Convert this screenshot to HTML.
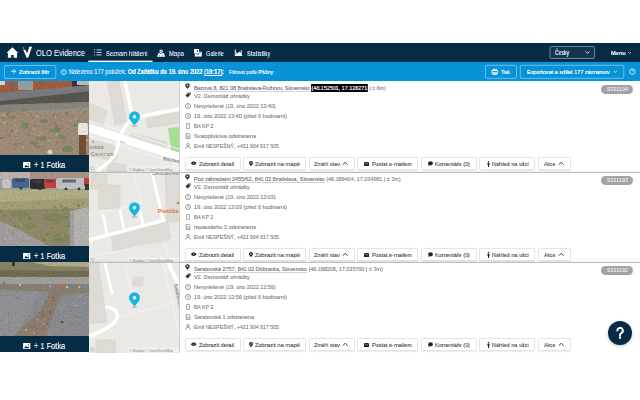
<!DOCTYPE html>
<html><head><meta charset="utf-8"><style>
*{margin:0;padding:0;box-sizing:border-box}
html,body{width:640px;height:400px;overflow:hidden;background:#fff;font-family:"Liberation Sans",sans-serif}
.abs{position:absolute}
#nav{position:absolute;left:0;top:43px;width:640px;height:19px;background:#062b45}
#bar{position:absolute;left:0;top:62px;width:640px;height:19px;background:#0893d8}
.t{position:absolute;white-space:nowrap;transform-origin:0 0;will-change:transform;z-index:5}
.wt{color:#fff;-webkit-text-stroke:0.08px #fff}
.ln{color:#707070;-webkit-text-stroke:0.1px #888}
.ln u{color:#555;text-decoration:none;background:linear-gradient(#b4b4b4,#b4b4b4) 0 100%/100% 0.6px no-repeat;padding-bottom:0.9px}
.sel{background:#000;color:#fff;-webkit-text-stroke:0.15px #fff;padding:0.9px 0.4px 0.7px 0.3px}
.bt{color:#fff}
.bx{color:#3c3c3c;-webkit-text-stroke:0.1px #555}
.ct{color:#fff;-webkit-text-stroke:0.2px #fff}
.photo{position:absolute;left:0;width:89px;height:90px;overflow:hidden}
.map{position:absolute;left:89px;width:91px;height:91px;overflow:hidden;border-right:1px solid #cfcfcf}
.cap{position:absolute;left:0;width:89px;background:#062b45}
.badge{position:absolute;left:601px;width:32.4px;height:9.4px;border-radius:4.7px;background:#a3a3a3}
.btn{position:absolute;height:12.2px;border:1px solid #e4e4e4;border-radius:1.5px;background:#fff;box-shadow:0 0.5px 1px rgba(0,0,0,0.08)}
.sep{position:absolute;z-index:2;left:89px;width:551px;height:1.2px;background:#bdbdbd;box-shadow:0 -1px 1.5px rgba(0,0,0,0.07)}
#help{position:absolute;left:608px;top:320.5px;width:24px;height:24px;border-radius:12px;background:#062b45;box-shadow:0 1px 3px rgba(0,0,0,0.25)}
</style></head><body>
<div class="photo" style="top:81px"><svg width="89" height="90" viewBox="0 0 89 90"><defs><filter id="nz0" x="0" y="0" width="100%" height="100%"><feTurbulence type="fractalNoise" baseFrequency="0.6" numOctaves="2" seed="3"/><feColorMatrix values="0 0 0 0 0  0 0 0 0 0  0 0 0 0 0  0 0 0 -1.6 1.1"/></filter></defs><defs><filter id="bl0" x="-5%" y="-5%" width="110%" height="110%"><feGaussianBlur stdDeviation="0.45"/></filter></defs><rect width="89" height="90" fill="#8e8070"/><g filter="url(#bl0)">
<rect width="89" height="90" fill="#a48f7c"/>
<polygon points="0,0 89,0 89,6 73,6 0,13" fill="#a65e40"/>
<rect x="0" y="0" width="5" height="4" fill="#d8dce0"/>
<rect x="11" y="0" width="2" height="10" fill="#6e6a68"/>
<rect x="18" y="0" width="15" height="9" fill="#9ea2a6"/>
<rect x="72" y="0" width="17" height="10" fill="#34363a"/>
<rect x="77" y="0" width="12" height="4" fill="#c0c4c8"/>
<polygon points="0,12 89,4 89,10 0,20" fill="#7e7f80"/>
<polygon points="0,20 89,10 89,21 0,24" fill="#5c5852"/>
<polygon points="0,24 89,21 89,27 0,31" fill="#8c8984"/>
<polygon points="20,31 89,26 89,29 40,32" fill="#9a9690" opacity="0.7"/>
<g fill="#6e8c52" opacity="0.75">
<ellipse cx="24" cy="29" rx="3" ry="1.5"/><ellipse cx="44" cy="40" rx="4" ry="2"/><ellipse cx="25" cy="45" rx="4" ry="3"/><ellipse cx="55" cy="49" rx="5" ry="2.5"/>
<ellipse cx="40" cy="57" rx="5" ry="2.5"/><ellipse cx="62" cy="56" rx="4" ry="2"/><ellipse cx="68" cy="68" rx="6" ry="3"/><ellipse cx="35" cy="62" rx="3" ry="2"/>
<ellipse cx="76" cy="44" rx="3" ry="2"/><ellipse cx="12" cy="36" rx="3" ry="1.5"/>
</g>
<ellipse cx="40.3" cy="54.6" rx="1.5" ry="1.1" fill="#b4a08c" opacity="0.6"/><ellipse cx="76.1" cy="38.4" rx="1.4" ry="1.0" fill="#b4a08c" opacity="0.6"/><ellipse cx="70.6" cy="34.1" rx="0.9" ry="0.5" fill="#7d6858" opacity="0.6"/><ellipse cx="53.0" cy="47.4" rx="1.1" ry="0.9" fill="#c8b8a6" opacity="0.6"/><ellipse cx="55.5" cy="66.6" rx="0.7" ry="0.3" fill="#c8b8a6" opacity="0.6"/><ellipse cx="53.4" cy="64.2" rx="0.9" ry="0.7" fill="#c8b8a6" opacity="0.6"/><ellipse cx="46.2" cy="58.2" rx="1.1" ry="0.9" fill="#8e7a66" opacity="0.6"/><ellipse cx="58.3" cy="47.9" rx="1.2" ry="1.1" fill="#7d6858" opacity="0.6"/><ellipse cx="63.0" cy="43.9" rx="0.8" ry="0.5" fill="#7d6858" opacity="0.6"/><ellipse cx="50.1" cy="34.7" rx="0.7" ry="0.5" fill="#7d6858" opacity="0.6"/><ellipse cx="85.3" cy="67.3" rx="0.6" ry="0.4" fill="#7d6858" opacity="0.6"/><ellipse cx="41.8" cy="73.1" rx="1.0" ry="0.5" fill="#c8b8a6" opacity="0.6"/><ellipse cx="69.3" cy="41.9" rx="0.7" ry="0.5" fill="#8e7a66" opacity="0.6"/><ellipse cx="67.5" cy="35.2" rx="0.8" ry="0.5" fill="#7d6858" opacity="0.6"/><ellipse cx="41.4" cy="51.4" rx="1.3" ry="0.8" fill="#b4a08c" opacity="0.6"/><ellipse cx="17.0" cy="62.2" rx="0.7" ry="0.6" fill="#7d6858" opacity="0.6"/><ellipse cx="35.1" cy="73.6" rx="0.6" ry="0.6" fill="#b4a08c" opacity="0.6"/><ellipse cx="27.1" cy="68.9" rx="0.8" ry="0.6" fill="#b4a08c" opacity="0.6"/><ellipse cx="57.1" cy="34.4" rx="1.6" ry="1.0" fill="#6e8a52" opacity="0.6"/><ellipse cx="0.9" cy="56.9" rx="1.4" ry="1.0" fill="#7d6858" opacity="0.6"/><ellipse cx="8.0" cy="55.6" rx="0.8" ry="0.7" fill="#6e8a52" opacity="0.6"/><ellipse cx="55.4" cy="35.6" rx="1.2" ry="1.1" fill="#c8b8a6" opacity="0.6"/><ellipse cx="77.1" cy="38.0" rx="0.8" ry="0.7" fill="#b4a08c" opacity="0.6"/><ellipse cx="22.2" cy="38.4" rx="1.3" ry="1.3" fill="#c8b8a6" opacity="0.6"/><ellipse cx="61.1" cy="47.1" rx="1.1" ry="0.6" fill="#7d6858" opacity="0.6"/><ellipse cx="9.2" cy="31.7" rx="1.6" ry="1.0" fill="#8e7a66" opacity="0.6"/><ellipse cx="22.9" cy="66.2" rx="1.2" ry="0.8" fill="#c8b8a6" opacity="0.6"/><ellipse cx="82.7" cy="73.0" rx="0.7" ry="0.5" fill="#b4a08c" opacity="0.6"/><ellipse cx="54.7" cy="42.3" rx="1.5" ry="0.9" fill="#7d6858" opacity="0.6"/><ellipse cx="6.2" cy="48.1" rx="0.8" ry="0.4" fill="#6e8a52" opacity="0.6"/><ellipse cx="32.8" cy="55.2" rx="0.7" ry="0.5" fill="#8e7a66" opacity="0.6"/><ellipse cx="87.3" cy="58.9" rx="1.3" ry="1.0" fill="#c8b8a6" opacity="0.6"/><ellipse cx="52.5" cy="70.6" rx="1.1" ry="0.7" fill="#6e8a52" opacity="0.6"/><ellipse cx="85.7" cy="30.9" rx="1.2" ry="0.9" fill="#6e8a52" opacity="0.6"/><ellipse cx="28.4" cy="74.0" rx="0.7" ry="0.5" fill="#7d6858" opacity="0.6"/><ellipse cx="80.1" cy="62.4" rx="1.3" ry="1.2" fill="#6e8a52" opacity="0.6"/><ellipse cx="31.3" cy="60.1" rx="1.5" ry="1.4" fill="#8e7a66" opacity="0.6"/><ellipse cx="84.0" cy="31.3" rx="1.1" ry="0.6" fill="#8e7a66" opacity="0.6"/><ellipse cx="33.7" cy="30.5" rx="0.7" ry="0.4" fill="#7d6858" opacity="0.6"/><ellipse cx="88.4" cy="68.7" rx="1.3" ry="0.9" fill="#b4a08c" opacity="0.6"/><ellipse cx="40.7" cy="50.4" rx="1.1" ry="0.9" fill="#b4a08c" opacity="0.6"/><ellipse cx="2.7" cy="56.5" rx="1.1" ry="0.7" fill="#7d6858" opacity="0.6"/><ellipse cx="44.3" cy="57.0" rx="1.5" ry="1.0" fill="#7d6858" opacity="0.6"/><ellipse cx="32.7" cy="36.3" rx="1.2" ry="0.9" fill="#6e8a52" opacity="0.6"/><ellipse cx="58.7" cy="49.4" rx="1.5" ry="1.0" fill="#6e8a52" opacity="0.6"/><ellipse cx="17.7" cy="49.0" rx="1.4" ry="1.3" fill="#c8b8a6" opacity="0.6"/><ellipse cx="34.2" cy="55.7" rx="0.9" ry="0.5" fill="#8e7a66" opacity="0.6"/><ellipse cx="31.2" cy="69.4" rx="0.6" ry="0.3" fill="#6e8a52" opacity="0.6"/><ellipse cx="73.1" cy="35.0" rx="1.1" ry="1.0" fill="#8e7a66" opacity="0.6"/><ellipse cx="34.0" cy="52.9" rx="1.3" ry="1.1" fill="#b4a08c" opacity="0.6"/><ellipse cx="40.3" cy="33.3" rx="0.6" ry="0.6" fill="#7d6858" opacity="0.6"/><ellipse cx="60.4" cy="42.4" rx="1.0" ry="0.8" fill="#b4a08c" opacity="0.6"/><ellipse cx="1.7" cy="36.0" rx="1.1" ry="0.5" fill="#6e8a52" opacity="0.6"/><ellipse cx="21.1" cy="36.2" rx="0.6" ry="0.5" fill="#8e7a66" opacity="0.6"/><ellipse cx="9.7" cy="53.6" rx="1.2" ry="0.8" fill="#7d6858" opacity="0.6"/><ellipse cx="60.9" cy="38.8" rx="1.1" ry="0.6" fill="#7d6858" opacity="0.6"/><ellipse cx="67.2" cy="53.5" rx="0.6" ry="0.4" fill="#6e8a52" opacity="0.6"/><ellipse cx="48.0" cy="71.7" rx="1.1" ry="1.1" fill="#c8b8a6" opacity="0.6"/><ellipse cx="35.0" cy="64.8" rx="1.5" ry="0.8" fill="#8e7a66" opacity="0.6"/><ellipse cx="11.6" cy="50.0" rx="1.2" ry="1.2" fill="#8e7a66" opacity="0.6"/><ellipse cx="49.0" cy="58.7" rx="1.1" ry="1.0" fill="#6e8a52" opacity="0.6"/><ellipse cx="41.3" cy="58.7" rx="0.8" ry="0.7" fill="#7d6858" opacity="0.6"/><ellipse cx="19.0" cy="69.6" rx="1.6" ry="1.6" fill="#b4a08c" opacity="0.6"/><ellipse cx="86.9" cy="71.0" rx="0.9" ry="0.7" fill="#7d6858" opacity="0.6"/><ellipse cx="31.0" cy="33.6" rx="1.0" ry="0.8" fill="#6e8a52" opacity="0.6"/><ellipse cx="43.4" cy="31.3" rx="1.4" ry="0.7" fill="#7d6858" opacity="0.6"/><ellipse cx="15.4" cy="44.7" rx="1.4" ry="0.8" fill="#c8b8a6" opacity="0.6"/><ellipse cx="89.0" cy="69.6" rx="1.1" ry="0.9" fill="#8e7a66" opacity="0.6"/><ellipse cx="84.2" cy="51.7" rx="1.5" ry="0.8" fill="#c8b8a6" opacity="0.6"/><ellipse cx="39.1" cy="54.6" rx="1.4" ry="1.1" fill="#c8b8a6" opacity="0.6"/><ellipse cx="46.5" cy="67.1" rx="1.2" ry="0.8" fill="#8e7a66" opacity="0.6"/><ellipse cx="85.0" cy="68.3" rx="1.2" ry="0.8" fill="#c8b8a6" opacity="0.6"/><ellipse cx="86.2" cy="53.1" rx="1.2" ry="0.7" fill="#b4a08c" opacity="0.6"/><ellipse cx="10.2" cy="30.2" rx="1.0" ry="0.8" fill="#7d6858" opacity="0.6"/><ellipse cx="45.9" cy="47.6" rx="1.4" ry="1.1" fill="#8e7a66" opacity="0.6"/><ellipse cx="8.3" cy="37.3" rx="1.5" ry="1.1" fill="#8e7a66" opacity="0.6"/><ellipse cx="24.0" cy="50.8" rx="0.7" ry="0.5" fill="#8e7a66" opacity="0.6"/><ellipse cx="46.7" cy="34.8" rx="1.0" ry="0.5" fill="#6e8a52" opacity="0.6"/><ellipse cx="11.5" cy="64.3" rx="0.6" ry="0.4" fill="#c8b8a6" opacity="0.6"/><ellipse cx="1.1" cy="42.5" rx="1.3" ry="0.8" fill="#8e7a66" opacity="0.6"/><ellipse cx="9.3" cy="62.2" rx="0.7" ry="0.5" fill="#6e8a52" opacity="0.6"/><ellipse cx="63.9" cy="60.9" rx="1.5" ry="0.8" fill="#8e7a66" opacity="0.6"/><ellipse cx="73.4" cy="57.1" rx="1.1" ry="1.1" fill="#b4a08c" opacity="0.6"/><ellipse cx="56.8" cy="53.3" rx="1.5" ry="1.2" fill="#c8b8a6" opacity="0.6"/><ellipse cx="20.7" cy="62.6" rx="1.4" ry="1.3" fill="#6e8a52" opacity="0.6"/><ellipse cx="53.7" cy="69.2" rx="0.8" ry="0.7" fill="#c8b8a6" opacity="0.6"/><ellipse cx="79.0" cy="35.9" rx="0.8" ry="0.7" fill="#6e8a52" opacity="0.6"/><ellipse cx="34.5" cy="49.1" rx="1.5" ry="1.2" fill="#c8b8a6" opacity="0.6"/><ellipse cx="17.9" cy="57.6" rx="1.4" ry="0.8" fill="#b4a08c" opacity="0.6"/><ellipse cx="60.7" cy="70.1" rx="1.6" ry="0.9" fill="#b4a08c" opacity="0.6"/><ellipse cx="56.5" cy="45.1" rx="1.6" ry="1.5" fill="#7d6858" opacity="0.6"/><ellipse cx="42.9" cy="31.1" rx="1.4" ry="1.1" fill="#b4a08c" opacity="0.6"/><ellipse cx="42.8" cy="38.3" rx="0.7" ry="0.4" fill="#c8b8a6" opacity="0.6"/><ellipse cx="88.1" cy="70.8" rx="0.7" ry="0.4" fill="#8e7a66" opacity="0.6"/><ellipse cx="6.9" cy="34.3" rx="1.0" ry="0.7" fill="#6e8a52" opacity="0.6"/><ellipse cx="38.3" cy="56.4" rx="0.6" ry="0.5" fill="#c8b8a6" opacity="0.6"/><ellipse cx="16.1" cy="50.0" rx="1.3" ry="0.9" fill="#c8b8a6" opacity="0.6"/><ellipse cx="53.8" cy="34.2" rx="1.4" ry="0.9" fill="#7d6858" opacity="0.6"/><ellipse cx="71.4" cy="61.0" rx="1.5" ry="1.2" fill="#8e7a66" opacity="0.6"/><ellipse cx="50.7" cy="38.4" rx="1.2" ry="0.8" fill="#6e8a52" opacity="0.6"/><ellipse cx="24.9" cy="35.1" rx="1.3" ry="0.8" fill="#8e7a66" opacity="0.6"/><ellipse cx="11.9" cy="44.5" rx="1.1" ry="0.8" fill="#8e7a66" opacity="0.6"/><ellipse cx="68.1" cy="47.9" rx="1.3" ry="0.7" fill="#6e8a52" opacity="0.6"/><ellipse cx="26.9" cy="34.4" rx="1.5" ry="1.5" fill="#b4a08c" opacity="0.6"/><ellipse cx="4.4" cy="42.0" rx="1.6" ry="1.0" fill="#c8b8a6" opacity="0.6"/><ellipse cx="58.7" cy="55.1" rx="1.1" ry="0.8" fill="#8e7a66" opacity="0.6"/><ellipse cx="57.2" cy="60.9" rx="1.4" ry="1.3" fill="#7d6858" opacity="0.6"/><ellipse cx="10.2" cy="34.8" rx="0.8" ry="0.6" fill="#b4a08c" opacity="0.6"/><ellipse cx="4.5" cy="38.6" rx="1.0" ry="0.5" fill="#6e8a52" opacity="0.6"/><ellipse cx="24.5" cy="45.0" rx="1.1" ry="0.8" fill="#b4a08c" opacity="0.6"/><ellipse cx="50.6" cy="73.8" rx="1.2" ry="1.1" fill="#7d6858" opacity="0.6"/><ellipse cx="48.9" cy="59.4" rx="1.6" ry="1.1" fill="#c8b8a6" opacity="0.6"/><ellipse cx="34.3" cy="72.7" rx="1.5" ry="1.1" fill="#b4a08c" opacity="0.6"/><ellipse cx="5.2" cy="71.6" rx="1.0" ry="0.8" fill="#b4a08c" opacity="0.6"/><ellipse cx="27.8" cy="53.3" rx="1.1" ry="0.7" fill="#6e8a52" opacity="0.6"/><ellipse cx="59.1" cy="62.9" rx="0.6" ry="0.6" fill="#b4a08c" opacity="0.6"/><ellipse cx="3.8" cy="36.9" rx="1.4" ry="0.9" fill="#6e8a52" opacity="0.6"/><ellipse cx="66.6" cy="32.2" rx="1.6" ry="1.5" fill="#7d6858" opacity="0.6"/><ellipse cx="71.0" cy="39.8" rx="1.3" ry="0.8" fill="#c8b8a6" opacity="0.6"/><ellipse cx="4.0" cy="34.3" rx="1.4" ry="1.3" fill="#c8b8a6" opacity="0.6"/><ellipse cx="87.1" cy="65.9" rx="1.2" ry="0.7" fill="#b4a08c" opacity="0.6"/><ellipse cx="37.1" cy="35.2" rx="1.5" ry="1.0" fill="#c8b8a6" opacity="0.6"/><ellipse cx="11.1" cy="49.5" rx="1.3" ry="0.9" fill="#6e8a52" opacity="0.6"/><ellipse cx="56.9" cy="60.0" rx="1.0" ry="0.8" fill="#c8b8a6" opacity="0.6"/><ellipse cx="84.8" cy="62.3" rx="0.8" ry="0.5" fill="#6e8a52" opacity="0.6"/><ellipse cx="69.8" cy="57.5" rx="1.0" ry="0.6" fill="#b4a08c" opacity="0.6"/><ellipse cx="62.2" cy="38.4" rx="0.9" ry="0.5" fill="#c8b8a6" opacity="0.6"/><ellipse cx="44.7" cy="58.7" rx="0.8" ry="0.7" fill="#7d6858" opacity="0.6"/><ellipse cx="0.8" cy="41.4" rx="0.6" ry="0.3" fill="#c8b8a6" opacity="0.6"/><ellipse cx="48.2" cy="33.2" rx="0.7" ry="0.6" fill="#b4a08c" opacity="0.6"/><ellipse cx="20.9" cy="73.2" rx="1.1" ry="0.7" fill="#6e8a52" opacity="0.6"/><ellipse cx="30.6" cy="62.8" rx="1.4" ry="0.8" fill="#7d6858" opacity="0.6"/><ellipse cx="39.8" cy="66.2" rx="1.4" ry="1.3" fill="#8e7a66" opacity="0.6"/><ellipse cx="37.8" cy="41.4" rx="1.4" ry="1.0" fill="#b4a08c" opacity="0.6"/><ellipse cx="29.0" cy="54.1" rx="1.3" ry="1.3" fill="#8e7a66" opacity="0.6"/><ellipse cx="58.2" cy="55.5" rx="1.1" ry="0.7" fill="#b4a08c" opacity="0.6"/><ellipse cx="7.4" cy="54.8" rx="1.1" ry="0.9" fill="#6e8a52" opacity="0.6"/><ellipse cx="73.3" cy="30.4" rx="0.9" ry="0.9" fill="#b4a08c" opacity="0.6"/><ellipse cx="7.3" cy="43.4" rx="1.3" ry="1.1" fill="#6e8a52" opacity="0.6"/><ellipse cx="78.5" cy="39.6" rx="1.3" ry="0.8" fill="#7d6858" opacity="0.6"/><ellipse cx="28.7" cy="49.4" rx="1.2" ry="1.1" fill="#6e8a52" opacity="0.6"/><ellipse cx="39.0" cy="65.3" rx="0.9" ry="0.6" fill="#8e7a66" opacity="0.6"/><ellipse cx="86.1" cy="62.1" rx="1.1" ry="0.6" fill="#6e8a52" opacity="0.6"/><ellipse cx="2.1" cy="59.8" rx="1.2" ry="1.1" fill="#b4a08c" opacity="0.6"/><ellipse cx="32.8" cy="47.2" rx="0.8" ry="0.6" fill="#c8b8a6" opacity="0.6"/><ellipse cx="15.7" cy="63.4" rx="1.5" ry="0.9" fill="#7d6858" opacity="0.6"/><ellipse cx="19.7" cy="32.5" rx="0.8" ry="0.5" fill="#7d6858" opacity="0.6"/><ellipse cx="58.0" cy="65.4" rx="0.7" ry="0.5" fill="#b4a08c" opacity="0.6"/><ellipse cx="7.5" cy="33.6" rx="1.3" ry="1.3" fill="#7d6858" opacity="0.6"/><ellipse cx="2.3" cy="58.8" rx="0.7" ry="0.6" fill="#8e7a66" opacity="0.6"/><ellipse cx="21.8" cy="39.7" rx="1.4" ry="1.0" fill="#8e7a66" opacity="0.6"/><ellipse cx="35.1" cy="44.9" rx="1.6" ry="1.3" fill="#8e7a66" opacity="0.6"/><ellipse cx="43.4" cy="65.4" rx="0.7" ry="0.5" fill="#7d6858" opacity="0.6"/><ellipse cx="36.5" cy="66.4" rx="1.3" ry="1.2" fill="#8e7a66" opacity="0.6"/><ellipse cx="74.2" cy="69.1" rx="1.6" ry="1.3" fill="#b4a08c" opacity="0.6"/><ellipse cx="32.2" cy="30.4" rx="0.7" ry="0.7" fill="#c8b8a6" opacity="0.6"/><ellipse cx="21.9" cy="37.1" rx="1.2" ry="1.0" fill="#6e8a52" opacity="0.6"/><ellipse cx="18.2" cy="48.7" rx="0.9" ry="0.9" fill="#7d6858" opacity="0.6"/><ellipse cx="42.0" cy="62.2" rx="0.9" ry="0.5" fill="#c8b8a6" opacity="0.6"/><ellipse cx="81.2" cy="63.1" rx="0.6" ry="0.5" fill="#7d6858" opacity="0.6"/>
<rect x="79" y="54" width="7" height="20" fill="#7a5236"/>
<rect x="78" y="42" width="10" height="12" rx="1.5" fill="#efeeea"/>
<ellipse cx="50" cy="71" rx="2.5" ry="2.5" fill="#ddd8d0"/>
</g><rect width="89" height="74" filter="url(#nz0)" opacity="0.14"/></svg></div><div class="cap" style="top:155px;height:17px"></div><svg class="abs" style="left:23.4px;top:161.6px" width="7.4" height="6.2" viewBox="0 0 14 12"><rect width="14" height="12" rx="1" fill="#fff"/><path d="M2 10L5.5 5.5L8 8L10 6.5L12 10z" fill="#062b45"/><circle cx="10" cy="3.5" r="1.3" fill="#062b45"/></svg><div class="t ct" id="t0" style="left:33.60px;top:161.12px;font-size:8.721px;line-height:8.721px;transform:scaleX(0.8526)">+ 1 Fotka</div><div class="map" style="top:81px"><svg width="91" height="91" viewBox="0 0 91 91"><rect width="91" height="91" fill="#ebe9e5"/>
<polygon points="18,0 30,0 38,42 26,44" fill="#dedbd5" stroke="#d2cfc8" stroke-width="0.5"/>
<polygon points="0,22 18,30 14,45 0,40" fill="#dedbd5" stroke="#d2cfc8" stroke-width="0.5"/>
<polygon points="57,38 90,31 90,42 59,47" fill="#dedbd5" stroke="#d2cfc8" stroke-width="0.5"/>
<polygon points="41,52 78,61 77,70 40,60" fill="#dedbd5" stroke="#d2cfc8" stroke-width="0.5"/>
<polygon points="0,58 30,66 27,80 0,75" fill="#dedbd5" stroke="#d2cfc8" stroke-width="0.5"/>
<polygon points="20,80 50,88 50,91 18,91" fill="#dedbd5" stroke="#d2cfc8" stroke-width="0.5"/>
<polygon points="79,47 91,46 91,74 83,75" fill="#a8de94"/>
<path d="M36 0 L43 34" stroke="#fff" stroke-width="3.5"/>
<path d="M46 37 Q60 33 91 28" stroke="#fff" stroke-width="3.5" fill="none"/>
<path d="M0 47 L91 76" stroke="#fff" stroke-width="8"/>
<path d="M0 54.5 L91 83.5" stroke="#f8f8f6" stroke-width="0.8"/>
<path d="M0 39.5 L91 68.5" stroke="#f8f8f6" stroke-width="0.8"/>
<path d="M30 60 L36 62" stroke="#6a7ae0" stroke-width="0.6"/>
<path d="M44 36 Q30 50 28 68 Q26 78 8 90" stroke="#fff" stroke-width="3.5" fill="none"/>
<circle cx="4" cy="61" r="0.7" fill="#a04040"/>
<text x="0.5" y="68" style="font-family:'Liberation Sans';font-size:5px" fill="#8a6a5e" textLength="14">nnická</text>
<text x="2" y="74.5" style="font-family:'Liberation Sans';font-size:5px" fill="#8a6a5e" textLength="23">Centrum</text>
<text x="74" y="79" style="font-family:'Liberation Sans';font-size:5px" fill="#555" transform="rotate(10 74 79)">Bazova</text>
<ellipse cx="45.5" cy="45" rx="3" ry="1" fill="#000" opacity="0.18"/><path d="M45.5 44.5 C43 41 40 38.8 40 35.8 A5.5 5.5 0 0 1 51 35.8 C51 38.8 48 41 45.5 44.5z" fill="#14b6e2"/><circle cx="45.5" cy="35.8" r="1.8" fill="#fff"/><rect x="38" y="85" width="53" height="6" fill="#f0f0ee" opacity="0.75"/><text x="40" y="89.6" style="font-family:'Liberation Sans';font-size:3.4px" fill="#8a8a8a">© Mapbox © OpenStreetMap</text><circle cx="3.5" cy="87.5" r="1.6" fill="none" stroke="#999" stroke-width="0.5"/></svg></div><svg class="abs" style="left:185px;top:83.3px" width="5" height="6" viewBox="0 0 10 12"><path d="M5 0.3C2.4 0.3 0.5 2.2 0.5 4.6c0 3 4.5 7.2 4.5 7.2s4.5-4.2 4.5-7.2C9.5 2.2 7.6 0.3 5 0.3z" fill="#333"/><circle cx="5" cy="4.6" r="1.6" fill="#fff"/></svg><div class="t ln" id="t1" style="left:194.00px;top:85.58px;font-size:5.814px;line-height:5.814px;transform:scaleX(0.9293)"><u>Bazová 8, 821 08 Bratislava-Ružinov, Slovensko</u> <span class="sel">(48.152501, 17.128271</span> | ± 6m)</div><svg class="abs" style="left:185px;top:91.8px" width="6" height="6" viewBox="0 0 12 12"><path d="M0.8 6.8L6.8 0.8H11.2v4.4L5.2 11.2z" fill="#333"/><circle cx="8.6" cy="3.4" r="1.1" fill="#fff"/></svg><div class="t ln" id="t2" style="left:194.00px;top:93.58px;font-size:5.814px;line-height:5.814px;transform:scaleX(0.9454)">V2. Demontáž ohrádky</div><svg class="abs" style="left:185px;top:103.3px" width="6" height="6" viewBox="0 0 12 12"><circle cx="6" cy="6" r="5" fill="none" stroke="#505050" stroke-width="1.1"/><path d="M6 3v3.6M6 7.9v1.1" stroke="#505050" stroke-width="1.1"/></svg><div class="t ln" id="t3" style="left:194.00px;top:103.58px;font-size:5.814px;line-height:5.814px;transform:scaleX(0.9309)">Nevyriešené (19. úno 2022 13:40)</div><svg class="abs" style="left:185px;top:113.3px" width="6" height="6" viewBox="0 0 12 12"><circle cx="6" cy="6" r="5" fill="none" stroke="#505050" stroke-width="1.1"/><path d="M6 3v3.2l2.4 1.8" fill="none" stroke="#505050" stroke-width="1.1"/></svg><div class="t ln" id="t4" style="left:194.00px;top:113.58px;font-size:5.814px;line-height:5.814px;transform:scaleX(0.9586)">19. úno 2022 13:40 (před 6 hodinami)</div><svg class="abs" style="left:185px;top:122.9px" width="6" height="6" viewBox="0 0 12 12"><rect x="3.2" y="0.6" width="5.6" height="10.8" rx="1" fill="none" stroke="#505050" stroke-width="1.1"/></svg><div class="t ln" id="t5" style="left:194.00px;top:123.58px;font-size:5.814px;line-height:5.814px;transform:scaleX(0.8977)">BA KP 2</div><svg class="abs" style="left:185px;top:133.1px" width="6" height="6" viewBox="0 0 12 12"><path d="M2.4 0.6h5l2.6 2.6v8.2H2.4z" fill="none" stroke="#505050" stroke-width="1.1"/><path d="M4 6.2h4M4 8.4h4" stroke="#505050" stroke-width="0.9"/></svg><div class="t ln" id="t6" style="left:194.00px;top:133.58px;font-size:5.814px;line-height:5.814px;transform:scaleX(0.9477)">Svatoplukova odstranena</div><svg class="abs" style="left:185px;top:143.0px" width="6" height="6" viewBox="0 0 12 12"><circle cx="6" cy="3.6" r="2.6" fill="none" stroke="#505050" stroke-width="1.1"/><path d="M1.2 11.6c0-3 2.2-4.6 4.8-4.6s4.8 1.6 4.8 4.6" fill="none" stroke="#505050" stroke-width="1.1"/></svg><div class="t ln" id="t7" style="left:194.00px;top:143.58px;font-size:5.814px;line-height:5.814px;transform:scaleX(0.8986)">Emil NESPEŠNÝ, +421 904 917 505</div><div class="badge" style="top:84.8px"></div><div class="t bt" id="t8" style="left:606.80px;top:87.19px;font-size:5.087px;line-height:5.087px;transform:scaleX(1.0873)">9321194</div><div class="btn" style="left:185px;top:157.40px;width:56px"></div><svg class="abs" style="left:191.20000000000002px;top:161.4px" width="5.4" height="4.6" viewBox="0 0 9 7.6"><path d="M0 3.8C1.6 0 7.4 0 9 3.8C7.4 7.6 1.6 7.6 0 3.8z" fill="#222"/><circle cx="4.5" cy="3.8" r="1.3" fill="#999"/></svg><div class="t bx" id="t9" style="left:198.80px;top:161.21px;font-size:6.250px;line-height:6.250px;transform:scaleX(0.8914)">Zobrazit detail</div><div class="btn" style="left:242.5px;top:157.40px;width:63.5px"></div><svg class="abs" style="left:248.8px;top:161.20000000000002px" width="4" height="5" viewBox="0 0 8 10"><path d="M4 0C1.8 0 0 1.8 0 4c0 3 4 6 4 6s4-3 4-6C8 1.8 6.2 0 4 0z" fill="#222"/><circle cx="4" cy="4" r="1.4" fill="#fff"/></svg><div class="t bx" id="t10" style="left:255.00px;top:161.21px;font-size:6.250px;line-height:6.250px;transform:scaleX(0.9252)">Zobrazit na mapě</div><div class="btn" style="left:308.5px;top:157.40px;width:46.0px"></div><div class="t bx" id="t11" style="left:313.50px;top:161.21px;font-size:6.250px;line-height:6.250px;transform:scaleX(0.8908)">Změň stav</div><svg class="abs" style="left:342.1px;top:161.4px" width="6.4" height="4.4" viewBox="0 0 6.4 4.4"><path d="M0.8 3.7L3.2 1.2L5.6 3.7" fill="none" stroke="#222" stroke-width="0.85"/></svg><div class="btn" style="left:357px;top:157.40px;width:60.5px"></div><svg class="abs" style="left:363.5px;top:161.8px" width="5" height="4" viewBox="0 0 10 8"><rect width="10" height="8" fill="#222"/><path d="M0.5 0.8L5 4.2L9.5 0.8" fill="none" stroke="#fff" stroke-width="0.9"/></svg><div class="t bx" id="t12" style="left:372.00px;top:161.21px;font-size:6.250px;line-height:6.250px;transform:scaleX(0.8926)">Poslat e-mailem</div><div class="btn" style="left:420.5px;top:157.40px;width:56.0px"></div><svg class="abs" style="left:427.5px;top:161.3px" width="5" height="5" viewBox="0 0 10 10"><ellipse cx="5" cy="4.6" rx="4.8" ry="4.2" fill="#222"/><path d="M1.2 7.6L0.2 9.8L3.6 8.6z" fill="#222"/></svg><div class="t bx" id="t13" style="left:435.00px;top:161.21px;font-size:6.250px;line-height:6.250px;transform:scaleX(0.8760)">Komentáře (0)</div><div class="btn" style="left:479px;top:157.40px;width:56px"></div><svg class="abs" style="left:486.5px;top:160.8px" width="3" height="6" viewBox="0 0 6 12"><circle cx="3" cy="1.5" r="1.5" fill="#222"/><path d="M1 3.5h4v4.5h-1v4h-2v-4h-1z" fill="#222"/></svg><div class="t bx" id="t14" style="left:492.00px;top:161.21px;font-size:6.250px;line-height:6.250px;transform:scaleX(0.8963)">Náhled na ulici</div><div class="btn" style="left:537.5px;top:157.40px;width:33.0px"></div><div class="t bx" id="t15" style="left:544.20px;top:161.21px;font-size:6.250px;line-height:6.250px;transform:scaleX(0.8198)">Akce</div><svg class="abs" style="left:558.2px;top:161.4px" width="6.4" height="4.4" viewBox="0 0 6.4 4.4"><path d="M0.8 3.7L3.2 1.2L5.6 3.7" fill="none" stroke="#222" stroke-width="0.85"/></svg><div class="sep" style="top:172px"></div><div class="photo" style="top:172px"><svg width="89" height="90" viewBox="0 0 89 90"><defs><filter id="nz1" x="0" y="0" width="100%" height="100%"><feTurbulence type="fractalNoise" baseFrequency="0.6" numOctaves="2" seed="4"/><feColorMatrix values="0 0 0 0 0  0 0 0 0 0  0 0 0 0 0  0 0 0 -1.6 1.1"/></filter></defs><defs><filter id="bl1" x="-5%" y="-5%" width="110%" height="110%"><feGaussianBlur stdDeviation="0.45"/></filter></defs><rect width="89" height="90" fill="#a09c74"/><g filter="url(#bl1)">
<rect width="89" height="90" fill="#a09c74"/>
<rect x="0" y="0" width="89" height="9" fill="#ad978c"/>
<rect x="0" y="0" width="30" height="7" fill="#c4b8b0"/>
<rect x="0" y="8" width="89" height="10" fill="#a8a49a"/>
<rect x="2" y="7" width="9" height="9" rx="2" fill="#c8ccd2"/>
<rect x="12" y="6" width="17" height="10" rx="2" fill="#4a6a94"/>
<rect x="30" y="7" width="16" height="10" rx="2" fill="#2e3034"/>
<rect x="44" y="7" width="14" height="9" rx="2" fill="#d04242"/>
<rect x="56" y="6" width="30" height="11" rx="3" fill="#c6c7ca"/>
<rect x="84" y="6" width="5" height="8" fill="#c83c3c"/>
<rect x="85" y="12" width="4" height="6" fill="#3a3a3e"/>
<g fill="#3a3a3e"><circle cx="21" cy="16" r="1.5"/><circle cx="40" cy="17" r="1.5"/><circle cx="66" cy="17" r="1.5"/><circle cx="79" cy="17" r="1.5"/></g>
<g fill="#3e4650" opacity="0.7"><rect x="15" y="7" width="10" height="3" rx="1"/><rect x="33" y="8" width="9" height="3" rx="1"/><rect x="62" y="7.5" width="14" height="3" rx="1"/><rect x="46" y="8" width="8" height="2.5" rx="1"/></g>
<polygon points="0,18 89,18 89,30 0,32" fill="#b6b288"/>
<polygon points="0,30 89,26 89,38 0,40" fill="#a6a47a"/>
<polygon points="0,38 89,36 89,74 0,74" fill="#928e6c"/>
<g fill="#7c8a58" opacity="0.6"><ellipse cx="20" cy="42" rx="10" ry="3"/><ellipse cx="55" cy="46" rx="12" ry="4"/><ellipse cx="60" cy="66" rx="9" ry="5"/><ellipse cx="30" cy="54" rx="6" ry="3"/></g>
<g fill="#a08a72" opacity="0.55"><ellipse cx="14" cy="50" rx="8" ry="2.5"/><ellipse cx="44" cy="60" rx="9" ry="4"/><ellipse cx="38" cy="70" rx="8" ry="3"/></g>
<ellipse cx="42.2" cy="58.9" rx="1.3" ry="0.7" fill="#7c8a58" opacity="0.6"/><ellipse cx="88.7" cy="51.2" rx="1.2" ry="0.9" fill="#a08a72" opacity="0.6"/><ellipse cx="49.7" cy="59.1" rx="0.7" ry="0.5" fill="#a08a72" opacity="0.6"/><ellipse cx="30.2" cy="39.3" rx="1.2" ry="0.7" fill="#b0ac84" opacity="0.6"/><ellipse cx="60.6" cy="65.1" rx="0.7" ry="0.7" fill="#a08a72" opacity="0.6"/><ellipse cx="8.1" cy="73.4" rx="1.5" ry="0.9" fill="#6a7448" opacity="0.6"/><ellipse cx="86.4" cy="53.7" rx="1.5" ry="1.2" fill="#7c8a58" opacity="0.6"/><ellipse cx="49.4" cy="52.3" rx="0.7" ry="0.5" fill="#6a7448" opacity="0.6"/><ellipse cx="42.4" cy="46.9" rx="0.6" ry="0.5" fill="#a08a72" opacity="0.6"/><ellipse cx="86.9" cy="59.2" rx="1.0" ry="0.7" fill="#6a7448" opacity="0.6"/><ellipse cx="60.0" cy="35.0" rx="0.8" ry="0.6" fill="#a08a72" opacity="0.6"/><ellipse cx="2.5" cy="66.2" rx="1.0" ry="0.8" fill="#a08a72" opacity="0.6"/><ellipse cx="60.1" cy="31.9" rx="0.8" ry="0.6" fill="#a08a72" opacity="0.6"/><ellipse cx="15.8" cy="60.6" rx="0.6" ry="0.4" fill="#b0ac84" opacity="0.6"/><ellipse cx="53.6" cy="61.9" rx="1.1" ry="0.8" fill="#b0ac84" opacity="0.6"/><ellipse cx="25.1" cy="51.0" rx="1.6" ry="1.2" fill="#a08a72" opacity="0.6"/><ellipse cx="41.4" cy="54.1" rx="0.8" ry="0.7" fill="#a08a72" opacity="0.6"/><ellipse cx="81.2" cy="30.3" rx="0.9" ry="0.8" fill="#b0ac84" opacity="0.6"/><ellipse cx="16.0" cy="65.0" rx="1.1" ry="0.7" fill="#7c8a58" opacity="0.6"/><ellipse cx="87.6" cy="73.9" rx="1.1" ry="0.6" fill="#b0ac84" opacity="0.6"/><ellipse cx="78.5" cy="59.4" rx="0.9" ry="0.5" fill="#6a7448" opacity="0.6"/><ellipse cx="43.6" cy="45.6" rx="1.3" ry="0.9" fill="#a08a72" opacity="0.6"/><ellipse cx="39.9" cy="57.1" rx="0.6" ry="0.4" fill="#6a7448" opacity="0.6"/><ellipse cx="62.7" cy="39.4" rx="0.9" ry="0.6" fill="#7c8a58" opacity="0.6"/><ellipse cx="61.8" cy="35.8" rx="1.5" ry="1.1" fill="#a08a72" opacity="0.6"/><ellipse cx="17.8" cy="50.8" rx="0.7" ry="0.5" fill="#b0ac84" opacity="0.6"/><ellipse cx="67.7" cy="48.4" rx="1.2" ry="1.1" fill="#a08a72" opacity="0.6"/><ellipse cx="51.6" cy="45.3" rx="1.0" ry="0.8" fill="#a08a72" opacity="0.6"/><ellipse cx="1.5" cy="61.2" rx="1.5" ry="1.4" fill="#7c8a58" opacity="0.6"/><ellipse cx="81.0" cy="53.5" rx="1.4" ry="1.0" fill="#7c8a58" opacity="0.6"/><ellipse cx="63.2" cy="38.3" rx="0.9" ry="0.8" fill="#6a7448" opacity="0.6"/><ellipse cx="55.4" cy="35.5" rx="1.1" ry="1.0" fill="#6a7448" opacity="0.6"/><ellipse cx="51.7" cy="33.2" rx="1.0" ry="0.5" fill="#b0ac84" opacity="0.6"/><ellipse cx="12.6" cy="34.0" rx="0.9" ry="0.8" fill="#6a7448" opacity="0.6"/><ellipse cx="32.5" cy="31.3" rx="1.1" ry="0.8" fill="#a08a72" opacity="0.6"/><ellipse cx="5.0" cy="56.1" rx="1.1" ry="1.0" fill="#7c8a58" opacity="0.6"/><ellipse cx="84.0" cy="30.3" rx="1.0" ry="0.6" fill="#a08a72" opacity="0.6"/><ellipse cx="61.3" cy="43.0" rx="1.1" ry="0.6" fill="#b0ac84" opacity="0.6"/><ellipse cx="14.4" cy="50.4" rx="1.2" ry="1.1" fill="#a08a72" opacity="0.6"/><ellipse cx="41.0" cy="64.6" rx="0.6" ry="0.6" fill="#6a7448" opacity="0.6"/><ellipse cx="47.9" cy="63.5" rx="1.0" ry="0.8" fill="#7c8a58" opacity="0.6"/><ellipse cx="86.5" cy="54.4" rx="1.3" ry="0.9" fill="#7c8a58" opacity="0.6"/><ellipse cx="28.7" cy="52.0" rx="1.0" ry="0.6" fill="#a08a72" opacity="0.6"/><ellipse cx="42.5" cy="65.2" rx="0.7" ry="0.5" fill="#6a7448" opacity="0.6"/><ellipse cx="71.5" cy="42.6" rx="1.5" ry="1.2" fill="#6a7448" opacity="0.6"/><ellipse cx="72.4" cy="64.7" rx="1.2" ry="0.7" fill="#b0ac84" opacity="0.6"/><ellipse cx="57.0" cy="67.1" rx="1.2" ry="1.1" fill="#6a7448" opacity="0.6"/><ellipse cx="37.7" cy="59.0" rx="0.9" ry="0.8" fill="#6a7448" opacity="0.6"/><ellipse cx="34.2" cy="47.6" rx="1.4" ry="0.8" fill="#a08a72" opacity="0.6"/><ellipse cx="74.4" cy="34.8" rx="0.9" ry="0.8" fill="#b0ac84" opacity="0.6"/><ellipse cx="87.2" cy="70.3" rx="1.4" ry="1.3" fill="#b0ac84" opacity="0.6"/><ellipse cx="74.1" cy="39.3" rx="1.5" ry="0.8" fill="#b0ac84" opacity="0.6"/><ellipse cx="3.8" cy="65.7" rx="0.8" ry="0.5" fill="#b0ac84" opacity="0.6"/><ellipse cx="82.5" cy="73.2" rx="1.4" ry="1.1" fill="#7c8a58" opacity="0.6"/><ellipse cx="54.0" cy="34.5" rx="1.3" ry="1.0" fill="#6a7448" opacity="0.6"/><ellipse cx="8.7" cy="30.3" rx="0.7" ry="0.5" fill="#6a7448" opacity="0.6"/><ellipse cx="56.6" cy="50.6" rx="1.2" ry="0.9" fill="#6a7448" opacity="0.6"/><ellipse cx="79.5" cy="31.2" rx="1.4" ry="0.7" fill="#a08a72" opacity="0.6"/><ellipse cx="43.7" cy="67.6" rx="1.3" ry="1.3" fill="#6a7448" opacity="0.6"/><ellipse cx="48.8" cy="72.4" rx="1.0" ry="0.5" fill="#a08a72" opacity="0.6"/><ellipse cx="31.0" cy="40.2" rx="1.0" ry="0.9" fill="#7c8a58" opacity="0.6"/><ellipse cx="83.0" cy="31.4" rx="1.3" ry="1.0" fill="#7c8a58" opacity="0.6"/><ellipse cx="52.8" cy="55.8" rx="1.4" ry="1.1" fill="#6a7448" opacity="0.6"/><ellipse cx="67.4" cy="48.6" rx="1.1" ry="0.8" fill="#a08a72" opacity="0.6"/><ellipse cx="34.8" cy="58.9" rx="0.9" ry="0.5" fill="#b0ac84" opacity="0.6"/><ellipse cx="12.6" cy="35.4" rx="1.1" ry="0.6" fill="#b0ac84" opacity="0.6"/><ellipse cx="1.1" cy="40.1" rx="1.1" ry="0.9" fill="#6a7448" opacity="0.6"/><ellipse cx="67.4" cy="44.9" rx="1.0" ry="0.9" fill="#6a7448" opacity="0.6"/><ellipse cx="30.5" cy="69.1" rx="1.2" ry="1.0" fill="#7c8a58" opacity="0.6"/><ellipse cx="20.5" cy="47.0" rx="1.2" ry="0.7" fill="#6a7448" opacity="0.6"/><ellipse cx="66.3" cy="41.1" rx="1.0" ry="0.6" fill="#6a7448" opacity="0.6"/><ellipse cx="15.4" cy="54.1" rx="1.2" ry="0.9" fill="#6a7448" opacity="0.6"/><ellipse cx="29.9" cy="46.5" rx="1.5" ry="1.4" fill="#6a7448" opacity="0.6"/><ellipse cx="6.3" cy="57.5" rx="1.5" ry="1.4" fill="#b0ac84" opacity="0.6"/><ellipse cx="54.8" cy="67.8" rx="0.7" ry="0.5" fill="#6a7448" opacity="0.6"/><ellipse cx="3.8" cy="44.5" rx="1.1" ry="1.0" fill="#7c8a58" opacity="0.6"/><ellipse cx="77.0" cy="37.2" rx="1.1" ry="0.6" fill="#b0ac84" opacity="0.6"/><ellipse cx="15.3" cy="49.3" rx="0.9" ry="0.8" fill="#a08a72" opacity="0.6"/><ellipse cx="16.7" cy="42.1" rx="0.7" ry="0.4" fill="#a08a72" opacity="0.6"/><ellipse cx="42.6" cy="72.2" rx="1.1" ry="1.0" fill="#6a7448" opacity="0.6"/><ellipse cx="39.3" cy="47.1" rx="0.9" ry="0.8" fill="#a08a72" opacity="0.6"/><ellipse cx="21.3" cy="53.1" rx="1.3" ry="1.0" fill="#b0ac84" opacity="0.6"/><ellipse cx="31.6" cy="43.5" rx="0.6" ry="0.6" fill="#b0ac84" opacity="0.6"/><ellipse cx="34.7" cy="72.6" rx="1.5" ry="0.9" fill="#6a7448" opacity="0.6"/><ellipse cx="51.4" cy="37.9" rx="1.0" ry="0.9" fill="#a08a72" opacity="0.6"/><ellipse cx="4.5" cy="35.1" rx="0.9" ry="0.5" fill="#7c8a58" opacity="0.6"/><ellipse cx="69.4" cy="54.3" rx="1.1" ry="0.7" fill="#7c8a58" opacity="0.6"/><ellipse cx="83.0" cy="36.4" rx="0.8" ry="0.8" fill="#b0ac84" opacity="0.6"/><ellipse cx="82.9" cy="53.2" rx="1.0" ry="0.6" fill="#a08a72" opacity="0.6"/><ellipse cx="68.1" cy="54.3" rx="1.4" ry="0.9" fill="#6a7448" opacity="0.6"/><ellipse cx="9.7" cy="57.2" rx="0.8" ry="0.7" fill="#7c8a58" opacity="0.6"/><ellipse cx="38.8" cy="30.9" rx="1.1" ry="0.7" fill="#6a7448" opacity="0.6"/><ellipse cx="7.6" cy="54.0" rx="1.5" ry="1.1" fill="#6a7448" opacity="0.6"/><ellipse cx="48.4" cy="67.3" rx="1.0" ry="0.9" fill="#7c8a58" opacity="0.6"/><ellipse cx="29.9" cy="33.2" rx="1.3" ry="0.8" fill="#b0ac84" opacity="0.6"/><ellipse cx="19.6" cy="47.9" rx="1.4" ry="1.2" fill="#7c8a58" opacity="0.6"/><ellipse cx="69.2" cy="59.8" rx="1.5" ry="1.2" fill="#b0ac84" opacity="0.6"/><ellipse cx="61.6" cy="45.3" rx="1.3" ry="1.1" fill="#7c8a58" opacity="0.6"/><ellipse cx="86.8" cy="36.2" rx="1.2" ry="0.7" fill="#a08a72" opacity="0.6"/><ellipse cx="15.8" cy="66.4" rx="1.5" ry="1.4" fill="#a08a72" opacity="0.6"/><ellipse cx="74.1" cy="30.9" rx="0.7" ry="0.5" fill="#6a7448" opacity="0.6"/><ellipse cx="62.4" cy="63.1" rx="1.4" ry="1.2" fill="#b0ac84" opacity="0.6"/><ellipse cx="38.5" cy="63.6" rx="0.8" ry="0.8" fill="#b0ac84" opacity="0.6"/><ellipse cx="31.9" cy="34.1" rx="1.1" ry="0.8" fill="#b0ac84" opacity="0.6"/><ellipse cx="3.6" cy="43.3" rx="1.5" ry="1.2" fill="#7c8a58" opacity="0.6"/><ellipse cx="26.6" cy="68.4" rx="0.9" ry="0.9" fill="#7c8a58" opacity="0.6"/><ellipse cx="81.7" cy="40.5" rx="1.1" ry="1.0" fill="#a08a72" opacity="0.6"/><ellipse cx="78.7" cy="33.8" rx="1.6" ry="1.3" fill="#6a7448" opacity="0.6"/><ellipse cx="88.4" cy="73.4" rx="0.9" ry="0.6" fill="#7c8a58" opacity="0.6"/><ellipse cx="38.9" cy="70.1" rx="0.9" ry="0.5" fill="#b0ac84" opacity="0.6"/><ellipse cx="58.8" cy="51.1" rx="0.8" ry="0.5" fill="#7c8a58" opacity="0.6"/><ellipse cx="73.5" cy="59.4" rx="1.1" ry="1.0" fill="#a08a72" opacity="0.6"/><ellipse cx="45.8" cy="59.6" rx="1.1" ry="0.9" fill="#b0ac84" opacity="0.6"/><ellipse cx="87.7" cy="67.2" rx="1.3" ry="1.0" fill="#a08a72" opacity="0.6"/><ellipse cx="47.2" cy="61.6" rx="1.6" ry="0.9" fill="#6a7448" opacity="0.6"/><ellipse cx="19.0" cy="41.3" rx="0.7" ry="0.5" fill="#6a7448" opacity="0.6"/><ellipse cx="46.0" cy="49.1" rx="1.0" ry="0.6" fill="#a08a72" opacity="0.6"/><ellipse cx="57.9" cy="36.3" rx="1.1" ry="0.7" fill="#b0ac84" opacity="0.6"/><ellipse cx="55.7" cy="59.2" rx="0.6" ry="0.5" fill="#6a7448" opacity="0.6"/><ellipse cx="66.0" cy="36.2" rx="1.5" ry="1.4" fill="#6a7448" opacity="0.6"/><ellipse cx="54.2" cy="60.5" rx="1.2" ry="0.7" fill="#6a7448" opacity="0.6"/><ellipse cx="70.6" cy="72.7" rx="1.5" ry="1.1" fill="#a08a72" opacity="0.6"/><ellipse cx="46.7" cy="57.8" rx="0.9" ry="0.6" fill="#b0ac84" opacity="0.6"/><ellipse cx="81.5" cy="54.0" rx="1.2" ry="0.6" fill="#7c8a58" opacity="0.6"/><ellipse cx="40.1" cy="52.9" rx="1.6" ry="1.3" fill="#a08a72" opacity="0.6"/><ellipse cx="59.8" cy="59.6" rx="0.6" ry="0.3" fill="#a08a72" opacity="0.6"/><ellipse cx="35.9" cy="54.6" rx="0.7" ry="0.6" fill="#7c8a58" opacity="0.6"/><ellipse cx="45.4" cy="64.9" rx="0.7" ry="0.4" fill="#6a7448" opacity="0.6"/><ellipse cx="2.3" cy="44.7" rx="1.6" ry="0.9" fill="#7c8a58" opacity="0.6"/><ellipse cx="0.9" cy="63.4" rx="1.0" ry="0.6" fill="#b0ac84" opacity="0.6"/><ellipse cx="10.6" cy="59.0" rx="0.8" ry="0.6" fill="#7c8a58" opacity="0.6"/><ellipse cx="78.2" cy="49.2" rx="1.6" ry="1.1" fill="#b0ac84" opacity="0.6"/><ellipse cx="81.3" cy="73.9" rx="0.7" ry="0.4" fill="#b0ac84" opacity="0.6"/><ellipse cx="78.8" cy="41.3" rx="1.4" ry="1.0" fill="#7c8a58" opacity="0.6"/><ellipse cx="10.6" cy="47.6" rx="0.8" ry="0.5" fill="#6a7448" opacity="0.6"/><ellipse cx="60.5" cy="68.0" rx="1.5" ry="1.1" fill="#6a7448" opacity="0.6"/><ellipse cx="61.6" cy="34.1" rx="1.5" ry="0.9" fill="#6a7448" opacity="0.6"/><ellipse cx="15.0" cy="73.5" rx="1.4" ry="1.0" fill="#b0ac84" opacity="0.6"/><ellipse cx="85.7" cy="40.4" rx="0.6" ry="0.4" fill="#6a7448" opacity="0.6"/><ellipse cx="34.9" cy="43.8" rx="1.3" ry="0.8" fill="#a08a72" opacity="0.6"/>
<path d="M0,49 Q22,58 48,74 L0,74z" fill="#a6a4a2"/>
<ellipse cx="10.4" cy="66.4" rx="1.3" ry="1.2" fill="#bcbab8" opacity="0.5"/><ellipse cx="26.1" cy="66.0" rx="1.5" ry="1.2" fill="#bcbab8" opacity="0.5"/><ellipse cx="5.2" cy="62.8" rx="0.8" ry="0.5" fill="#929090" opacity="0.5"/><ellipse cx="5.1" cy="66.4" rx="1.6" ry="1.6" fill="#bcbab8" opacity="0.5"/><ellipse cx="3.4" cy="69.1" rx="1.5" ry="0.9" fill="#929090" opacity="0.5"/><ellipse cx="29.8" cy="72.8" rx="1.4" ry="0.9" fill="#bcbab8" opacity="0.5"/><ellipse cx="19.5" cy="68.1" rx="1.2" ry="0.8" fill="#929090" opacity="0.5"/><ellipse cx="35.5" cy="65.3" rx="1.3" ry="0.8" fill="#929090" opacity="0.5"/><ellipse cx="27.6" cy="63.3" rx="1.3" ry="0.8" fill="#929090" opacity="0.5"/><ellipse cx="21.4" cy="57.0" rx="0.8" ry="0.5" fill="#929090" opacity="0.5"/><ellipse cx="18.4" cy="64.5" rx="1.0" ry="0.6" fill="#929090" opacity="0.5"/><ellipse cx="22.0" cy="63.6" rx="1.5" ry="1.3" fill="#bcbab8" opacity="0.5"/><ellipse cx="2.9" cy="65.6" rx="1.6" ry="1.1" fill="#929090" opacity="0.5"/><ellipse cx="37.3" cy="51.0" rx="0.7" ry="0.7" fill="#929090" opacity="0.5"/><ellipse cx="25.6" cy="53.8" rx="1.0" ry="0.9" fill="#929090" opacity="0.5"/><ellipse cx="8.1" cy="70.5" rx="1.0" ry="0.8" fill="#bcbab8" opacity="0.5"/><ellipse cx="36.1" cy="66.9" rx="0.8" ry="0.6" fill="#bcbab8" opacity="0.5"/><ellipse cx="23.2" cy="64.2" rx="1.0" ry="0.8" fill="#929090" opacity="0.5"/><ellipse cx="7.3" cy="54.6" rx="1.4" ry="1.1" fill="#bcbab8" opacity="0.5"/><ellipse cx="6.7" cy="60.3" rx="1.2" ry="1.1" fill="#bcbab8" opacity="0.5"/><ellipse cx="38.8" cy="69.8" rx="1.2" ry="1.0" fill="#bcbab8" opacity="0.5"/><ellipse cx="39.9" cy="52.9" rx="0.9" ry="0.6" fill="#bcbab8" opacity="0.5"/><ellipse cx="37.5" cy="62.5" rx="1.5" ry="0.8" fill="#929090" opacity="0.5"/><ellipse cx="13.4" cy="61.9" rx="1.6" ry="1.2" fill="#929090" opacity="0.5"/><ellipse cx="8.9" cy="55.0" rx="1.4" ry="1.0" fill="#bcbab8" opacity="0.5"/>
<polygon points="70,39 89,35 89,74 70,74" fill="#bab8b4"/>
<polygon points="70,39 74,38 74,74 70,74" fill="#a8a6a2"/>
</g><rect width="89" height="74" filter="url(#nz1)" opacity="0.14"/></svg></div><div class="cap" style="top:246px;height:16px"></div><svg class="abs" style="left:23.4px;top:252.6px" width="7.4" height="6.2" viewBox="0 0 14 12"><rect width="14" height="12" rx="1" fill="#fff"/><path d="M2 10L5.5 5.5L8 8L10 6.5L12 10z" fill="#062b45"/><circle cx="10" cy="3.5" r="1.3" fill="#062b45"/></svg><div class="t ct" id="t16" style="left:33.60px;top:252.12px;font-size:8.721px;line-height:8.721px;transform:scaleX(0.8526)">+ 1 Fotka</div><div class="map" style="top:172px"><svg width="91" height="91" viewBox="0 0 91 91"><rect width="91" height="91" fill="#ebe9e5"/>
<polygon points="2,2 18,2 18,17 2,17" fill="#dedbd5" stroke="#d2cfc8" stroke-width="0.5"/>
<polygon points="9,13 31,13 31,37 10,37" fill="#dedbd5" stroke="#d2cfc8" stroke-width="0.5"/>
<polygon points="22,61 79,50 82,69 24,79" fill="#dedbd5" stroke="#d2cfc8" stroke-width="0.5"/>
<polygon points="76,0 91,0 91,50 78,50" fill="#dedbd5" stroke="#d2cfc8" stroke-width="0.5"/>
<path d="M0 43 L50 32" stroke="#fafafa" stroke-width="0.9" stroke-dasharray="1.4 0.9" fill="none"/>
<path d="M45 0 L52 32" stroke="#fafafa" stroke-width="0.9" stroke-dasharray="1.4 0.9" fill="none"/>
<path d="M0 85 L91 66" stroke="#fafafa" stroke-width="0.9" stroke-dasharray="1.4 0.9" fill="none"/>
<path d="M75 70 L82 91" stroke="#fafafa" stroke-width="0.9" stroke-dasharray="1.4 0.9" fill="none"/>
<path d="M2 70 L5 91" stroke="#fafafa" stroke-width="0.9" stroke-dasharray="1.4 0.9" fill="none"/>
<path d="M63 0 L74 48" stroke="#fff" stroke-width="3"/>
<path d="M0 68 L76 48" stroke="#fff" stroke-width="3.5"/>
<path d="M14 42 L18 63 M31 38 L35 57 M50 36 L54 52" stroke="#fff" stroke-width="2.8"/>
<text x="63" y="3" style="font-family:'Liberation Sans';font-size:5px" fill="#666">Centrum Fin</text>
<text x="69" y="41" style="font-family:'Liberation Sans';font-size:5px;font-weight:bold" fill="#e0703a">Pivnička</text>
<circle cx="89" cy="31" r="1.3" fill="#e0703a"/>
<ellipse cx="45.5" cy="45" rx="3" ry="1" fill="#000" opacity="0.18"/><path d="M45.5 44.5 C43 41 40 38.8 40 35.8 A5.5 5.5 0 0 1 51 35.8 C51 38.8 48 41 45.5 44.5z" fill="#14b6e2"/><circle cx="45.5" cy="35.8" r="1.8" fill="#fff"/><rect x="38" y="85" width="53" height="6" fill="#f0f0ee" opacity="0.75"/><text x="40" y="89.6" style="font-family:'Liberation Sans';font-size:3.4px" fill="#8a8a8a">© Mapbox © OpenStreetMap</text><circle cx="3.5" cy="87.5" r="1.6" fill="none" stroke="#999" stroke-width="0.5"/></svg></div><svg class="abs" style="left:185px;top:174.3px" width="5" height="6" viewBox="0 0 10 12"><path d="M5 0.3C2.4 0.3 0.5 2.2 0.5 4.6c0 3 4.5 7.2 4.5 7.2s4.5-4.2 4.5-7.2C9.5 2.2 7.6 0.3 5 0.3z" fill="#333"/><circle cx="5" cy="4.6" r="1.6" fill="#fff"/></svg><div class="t ln" id="t17" style="left:194.00px;top:176.58px;font-size:5.814px;line-height:5.814px;transform:scaleX(0.9369)"><u>Pod záhradami 2455/62, 841 02 Bratislava, Slovensko</u> (48.189404, 17.034981 | ± 3m)</div><svg class="abs" style="left:185px;top:182.8px" width="6" height="6" viewBox="0 0 12 12"><path d="M0.8 6.8L6.8 0.8H11.2v4.4L5.2 11.2z" fill="#333"/><circle cx="8.6" cy="3.4" r="1.1" fill="#fff"/></svg><div class="t ln" id="t18" style="left:194.00px;top:184.58px;font-size:5.814px;line-height:5.814px;transform:scaleX(0.9454)">V2. Demontáž ohrádky</div><svg class="abs" style="left:185px;top:194.3px" width="6" height="6" viewBox="0 0 12 12"><circle cx="6" cy="6" r="5" fill="none" stroke="#505050" stroke-width="1.1"/><path d="M6 3v3.6M6 7.9v1.1" stroke="#505050" stroke-width="1.1"/></svg><div class="t ln" id="t19" style="left:194.00px;top:194.58px;font-size:5.814px;line-height:5.814px;transform:scaleX(0.9309)">Nevyriešené (19. úno 2022 13:03)</div><svg class="abs" style="left:185px;top:204.3px" width="6" height="6" viewBox="0 0 12 12"><circle cx="6" cy="6" r="5" fill="none" stroke="#505050" stroke-width="1.1"/><path d="M6 3v3.2l2.4 1.8" fill="none" stroke="#505050" stroke-width="1.1"/></svg><div class="t ln" id="t20" style="left:194.00px;top:204.58px;font-size:5.814px;line-height:5.814px;transform:scaleX(0.9586)">19. úno 2022 13:03 (před 6 hodinami)</div><svg class="abs" style="left:185px;top:213.9px" width="6" height="6" viewBox="0 0 12 12"><rect x="3.2" y="0.6" width="5.6" height="10.8" rx="1" fill="none" stroke="#505050" stroke-width="1.1"/></svg><div class="t ln" id="t21" style="left:194.00px;top:214.58px;font-size:5.814px;line-height:5.814px;transform:scaleX(0.8977)">BA KP 2</div><svg class="abs" style="left:185px;top:224.1px" width="6" height="6" viewBox="0 0 12 12"><path d="M2.4 0.6h5l2.6 2.6v8.2H2.4z" fill="none" stroke="#505050" stroke-width="1.1"/><path d="M4 6.2h4M4 8.4h4" stroke="#505050" stroke-width="0.9"/></svg><div class="t ln" id="t22" style="left:194.00px;top:224.58px;font-size:5.814px;line-height:5.814px;transform:scaleX(0.9477)">repasskeho 3 odstranena</div><svg class="abs" style="left:185px;top:234.0px" width="6" height="6" viewBox="0 0 12 12"><circle cx="6" cy="3.6" r="2.6" fill="none" stroke="#505050" stroke-width="1.1"/><path d="M1.2 11.6c0-3 2.2-4.6 4.8-4.6s4.8 1.6 4.8 4.6" fill="none" stroke="#505050" stroke-width="1.1"/></svg><div class="t ln" id="t23" style="left:194.00px;top:234.58px;font-size:5.814px;line-height:5.814px;transform:scaleX(0.8986)">Emil NESPEŠNÝ, +421 904 917 505</div><div class="badge" style="top:175.8px"></div><div class="t bt" id="t24" style="left:606.80px;top:178.19px;font-size:5.087px;line-height:5.087px;transform:scaleX(1.0873)">9321193</div><div class="btn" style="left:185px;top:248.40px;width:56px"></div><svg class="abs" style="left:191.20000000000002px;top:252.4px" width="5.4" height="4.6" viewBox="0 0 9 7.6"><path d="M0 3.8C1.6 0 7.4 0 9 3.8C7.4 7.6 1.6 7.6 0 3.8z" fill="#222"/><circle cx="4.5" cy="3.8" r="1.3" fill="#999"/></svg><div class="t bx" id="t25" style="left:198.80px;top:252.21px;font-size:6.250px;line-height:6.250px;transform:scaleX(0.8914)">Zobrazit detail</div><div class="btn" style="left:242.5px;top:248.40px;width:63.5px"></div><svg class="abs" style="left:248.8px;top:252.20000000000002px" width="4" height="5" viewBox="0 0 8 10"><path d="M4 0C1.8 0 0 1.8 0 4c0 3 4 6 4 6s4-3 4-6C8 1.8 6.2 0 4 0z" fill="#222"/><circle cx="4" cy="4" r="1.4" fill="#fff"/></svg><div class="t bx" id="t26" style="left:255.00px;top:252.21px;font-size:6.250px;line-height:6.250px;transform:scaleX(0.9252)">Zobrazit na mapě</div><div class="btn" style="left:308.5px;top:248.40px;width:46.0px"></div><div class="t bx" id="t27" style="left:313.50px;top:252.21px;font-size:6.250px;line-height:6.250px;transform:scaleX(0.8908)">Změň stav</div><svg class="abs" style="left:342.1px;top:252.4px" width="6.4" height="4.4" viewBox="0 0 6.4 4.4"><path d="M0.8 3.7L3.2 1.2L5.6 3.7" fill="none" stroke="#222" stroke-width="0.85"/></svg><div class="btn" style="left:357px;top:248.40px;width:60.5px"></div><svg class="abs" style="left:363.5px;top:252.8px" width="5" height="4" viewBox="0 0 10 8"><rect width="10" height="8" fill="#222"/><path d="M0.5 0.8L5 4.2L9.5 0.8" fill="none" stroke="#fff" stroke-width="0.9"/></svg><div class="t bx" id="t28" style="left:372.00px;top:252.21px;font-size:6.250px;line-height:6.250px;transform:scaleX(0.8926)">Poslat e-mailem</div><div class="btn" style="left:420.5px;top:248.40px;width:56.0px"></div><svg class="abs" style="left:427.5px;top:252.3px" width="5" height="5" viewBox="0 0 10 10"><ellipse cx="5" cy="4.6" rx="4.8" ry="4.2" fill="#222"/><path d="M1.2 7.6L0.2 9.8L3.6 8.6z" fill="#222"/></svg><div class="t bx" id="t29" style="left:435.00px;top:252.21px;font-size:6.250px;line-height:6.250px;transform:scaleX(0.8760)">Komentáře (0)</div><div class="btn" style="left:479px;top:248.40px;width:56px"></div><svg class="abs" style="left:486.5px;top:251.8px" width="3" height="6" viewBox="0 0 6 12"><circle cx="3" cy="1.5" r="1.5" fill="#222"/><path d="M1 3.5h4v4.5h-1v4h-2v-4h-1z" fill="#222"/></svg><div class="t bx" id="t30" style="left:492.00px;top:252.21px;font-size:6.250px;line-height:6.250px;transform:scaleX(0.8963)">Náhled na ulici</div><div class="btn" style="left:537.5px;top:248.40px;width:33.0px"></div><div class="t bx" id="t31" style="left:544.20px;top:252.21px;font-size:6.250px;line-height:6.250px;transform:scaleX(0.8198)">Akce</div><svg class="abs" style="left:558.2px;top:252.4px" width="6.4" height="4.4" viewBox="0 0 6.4 4.4"><path d="M0.8 3.7L3.2 1.2L5.6 3.7" fill="none" stroke="#222" stroke-width="0.85"/></svg><div class="sep" style="top:262px"></div><div class="photo" style="top:262px"><svg width="89" height="90" viewBox="0 0 89 90"><defs><filter id="nz2" x="0" y="0" width="100%" height="100%"><feTurbulence type="fractalNoise" baseFrequency="0.6" numOctaves="2" seed="5"/><feColorMatrix values="0 0 0 0 0  0 0 0 0 0  0 0 0 0 0  0 0 0 -1.6 1.1"/></filter></defs><defs><filter id="bl2" x="-5%" y="-5%" width="110%" height="110%"><feGaussianBlur stdDeviation="0.45"/></filter></defs><rect width="89" height="90" fill="#8e9094"/><g filter="url(#bl2)">
<rect width="89" height="90" fill="#8e9094"/>
<rect x="0" y="0" width="89" height="16" fill="#8c8668"/>
<polygon points="30,0 89,0 89,5 50,4" fill="#b8ae90"/>
<polygon points="0,8 89,9 89,15 0,15" fill="#747054"/>
<rect x="12" y="0" width="3" height="4" fill="#3e3a30"/>
<rect x="0" y="15" width="89" height="8" fill="#a4a4a0"/>
<polygon points="0,22 89,22 89,30 65,33 40,29 10,28 0,27" fill="#8c8474"/>
<g opacity="0.9"><circle cx="4" cy="21" r="1.5" fill="#4aa060"/><circle cx="20" cy="23" r="1" fill="#d8d8d8"/><circle cx="62" cy="24" r="1.5" fill="#d86a3a"/><circle cx="67" cy="25" r="1" fill="#e8e8e8"/><circle cx="73" cy="25" r="1.5" fill="#4a90c8"/><circle cx="79" cy="25" r="1.2" fill="#e0c040"/><circle cx="84" cy="24" r="1.3" fill="#40a8e0"/><circle cx="50" cy="24" r="1" fill="#c0c0c0"/></g>
<polygon points="0,30 40,30 30,50 15,74 0,74" fill="#9a9ca0" opacity="0.5"/>
<ellipse cx="9.5" cy="60.9" rx="1.3" ry="1.2" fill="#7e8084" opacity="0.5"/><ellipse cx="65.4" cy="42.8" rx="0.7" ry="0.5" fill="#7e8084" opacity="0.5"/><ellipse cx="60.9" cy="47.5" rx="1.4" ry="0.8" fill="#9c9ea2" opacity="0.5"/><ellipse cx="77.5" cy="43.9" rx="1.4" ry="1.0" fill="#a8aaae" opacity="0.5"/><ellipse cx="56.2" cy="36.6" rx="1.2" ry="1.0" fill="#9c9ea2" opacity="0.5"/><ellipse cx="0.9" cy="33.1" rx="1.2" ry="0.6" fill="#7e8084" opacity="0.5"/><ellipse cx="18.2" cy="73.0" rx="1.0" ry="1.0" fill="#7e8084" opacity="0.5"/><ellipse cx="79.8" cy="34.2" rx="1.2" ry="1.2" fill="#a8aaae" opacity="0.5"/><ellipse cx="52.4" cy="57.9" rx="0.8" ry="0.4" fill="#7e8084" opacity="0.5"/><ellipse cx="45.7" cy="38.5" rx="1.1" ry="0.6" fill="#7e8084" opacity="0.5"/><ellipse cx="44.5" cy="34.5" rx="1.4" ry="0.8" fill="#7e8084" opacity="0.5"/><ellipse cx="10.5" cy="37.1" rx="1.0" ry="0.9" fill="#a8aaae" opacity="0.5"/><ellipse cx="8.3" cy="51.1" rx="1.3" ry="1.0" fill="#7e8084" opacity="0.5"/><ellipse cx="27.5" cy="50.2" rx="1.0" ry="0.9" fill="#7e8084" opacity="0.5"/><ellipse cx="42.2" cy="40.4" rx="1.5" ry="1.4" fill="#9c9ea2" opacity="0.5"/><ellipse cx="50.6" cy="51.5" rx="0.9" ry="0.6" fill="#a8aaae" opacity="0.5"/><ellipse cx="36.1" cy="73.4" rx="0.6" ry="0.5" fill="#7e8084" opacity="0.5"/><ellipse cx="83.6" cy="41.6" rx="0.9" ry="0.5" fill="#a8aaae" opacity="0.5"/><ellipse cx="49.8" cy="65.1" rx="0.7" ry="0.4" fill="#9c9ea2" opacity="0.5"/><ellipse cx="27.8" cy="73.2" rx="1.2" ry="0.8" fill="#7e8084" opacity="0.5"/><ellipse cx="88.1" cy="35.0" rx="1.6" ry="1.4" fill="#9c9ea2" opacity="0.5"/><ellipse cx="20.5" cy="68.4" rx="0.9" ry="0.5" fill="#a8aaae" opacity="0.5"/><ellipse cx="60.5" cy="44.6" rx="1.3" ry="1.3" fill="#9c9ea2" opacity="0.5"/><ellipse cx="49.9" cy="56.2" rx="1.5" ry="1.4" fill="#a8aaae" opacity="0.5"/><ellipse cx="57.4" cy="38.7" rx="1.1" ry="0.7" fill="#7e8084" opacity="0.5"/><ellipse cx="48.6" cy="64.0" rx="0.9" ry="0.9" fill="#a8aaae" opacity="0.5"/><ellipse cx="2.8" cy="58.3" rx="1.0" ry="0.9" fill="#9c9ea2" opacity="0.5"/><ellipse cx="23.4" cy="34.5" rx="0.8" ry="0.7" fill="#9c9ea2" opacity="0.5"/><ellipse cx="18.8" cy="51.4" rx="0.7" ry="0.7" fill="#9c9ea2" opacity="0.5"/><ellipse cx="69.9" cy="41.3" rx="1.0" ry="0.7" fill="#9c9ea2" opacity="0.5"/><ellipse cx="39.6" cy="34.0" rx="1.4" ry="0.8" fill="#9c9ea2" opacity="0.5"/><ellipse cx="59.5" cy="39.8" rx="1.2" ry="1.0" fill="#7e8084" opacity="0.5"/><ellipse cx="88.5" cy="56.2" rx="1.4" ry="1.2" fill="#a8aaae" opacity="0.5"/><ellipse cx="36.2" cy="41.7" rx="1.1" ry="1.0" fill="#7e8084" opacity="0.5"/><ellipse cx="5.5" cy="59.9" rx="1.5" ry="1.2" fill="#9c9ea2" opacity="0.5"/><ellipse cx="81.9" cy="33.0" rx="1.4" ry="0.8" fill="#9c9ea2" opacity="0.5"/><ellipse cx="73.8" cy="71.0" rx="0.7" ry="0.6" fill="#7e8084" opacity="0.5"/><ellipse cx="4.0" cy="73.3" rx="1.5" ry="0.9" fill="#7e8084" opacity="0.5"/><ellipse cx="41.7" cy="68.0" rx="1.3" ry="0.7" fill="#9c9ea2" opacity="0.5"/><ellipse cx="86.5" cy="40.9" rx="1.3" ry="1.1" fill="#9c9ea2" opacity="0.5"/><ellipse cx="48.8" cy="65.0" rx="1.3" ry="0.7" fill="#7e8084" opacity="0.5"/><ellipse cx="80.2" cy="67.6" rx="1.0" ry="0.7" fill="#7e8084" opacity="0.5"/><ellipse cx="64.5" cy="44.7" rx="0.9" ry="0.5" fill="#a8aaae" opacity="0.5"/><ellipse cx="71.8" cy="61.1" rx="1.6" ry="1.2" fill="#7e8084" opacity="0.5"/><ellipse cx="2.3" cy="58.4" rx="1.6" ry="1.1" fill="#7e8084" opacity="0.5"/><ellipse cx="70.7" cy="48.6" rx="1.3" ry="1.3" fill="#7e8084" opacity="0.5"/><ellipse cx="86.5" cy="64.4" rx="1.0" ry="0.8" fill="#9c9ea2" opacity="0.5"/><ellipse cx="34.5" cy="52.9" rx="0.7" ry="0.4" fill="#9c9ea2" opacity="0.5"/><ellipse cx="17.4" cy="67.4" rx="0.7" ry="0.6" fill="#7e8084" opacity="0.5"/><ellipse cx="77.1" cy="54.6" rx="0.6" ry="0.5" fill="#a8aaae" opacity="0.5"/><ellipse cx="53.7" cy="42.5" rx="1.6" ry="1.2" fill="#a8aaae" opacity="0.5"/><ellipse cx="6.1" cy="33.3" rx="1.3" ry="1.1" fill="#7e8084" opacity="0.5"/><ellipse cx="61.5" cy="46.9" rx="1.2" ry="0.9" fill="#a8aaae" opacity="0.5"/><ellipse cx="31.0" cy="51.9" rx="1.4" ry="0.9" fill="#9c9ea2" opacity="0.5"/><ellipse cx="54.3" cy="50.3" rx="1.5" ry="1.4" fill="#7e8084" opacity="0.5"/><ellipse cx="80.5" cy="53.5" rx="0.8" ry="0.6" fill="#a8aaae" opacity="0.5"/><ellipse cx="27.3" cy="46.1" rx="0.9" ry="0.7" fill="#a8aaae" opacity="0.5"/><ellipse cx="15.5" cy="65.1" rx="0.6" ry="0.5" fill="#9c9ea2" opacity="0.5"/><ellipse cx="88.7" cy="68.5" rx="0.8" ry="0.8" fill="#7e8084" opacity="0.5"/><ellipse cx="52.6" cy="66.2" rx="1.4" ry="0.8" fill="#9c9ea2" opacity="0.5"/><ellipse cx="76.0" cy="54.4" rx="1.0" ry="0.9" fill="#7e8084" opacity="0.5"/><ellipse cx="9.8" cy="31.8" rx="1.5" ry="0.9" fill="#7e8084" opacity="0.5"/><ellipse cx="17.7" cy="64.9" rx="0.7" ry="0.7" fill="#9c9ea2" opacity="0.5"/><ellipse cx="83.0" cy="42.4" rx="1.0" ry="0.7" fill="#9c9ea2" opacity="0.5"/><ellipse cx="39.0" cy="63.9" rx="1.4" ry="0.7" fill="#a8aaae" opacity="0.5"/><ellipse cx="73.1" cy="40.6" rx="1.2" ry="0.7" fill="#a8aaae" opacity="0.5"/><ellipse cx="87.3" cy="55.9" rx="0.8" ry="0.4" fill="#7e8084" opacity="0.5"/><ellipse cx="76.8" cy="57.6" rx="1.4" ry="0.8" fill="#a8aaae" opacity="0.5"/><ellipse cx="84.7" cy="68.4" rx="1.2" ry="0.7" fill="#9c9ea2" opacity="0.5"/><ellipse cx="11.9" cy="54.4" rx="0.9" ry="0.7" fill="#a8aaae" opacity="0.5"/><ellipse cx="59.3" cy="72.8" rx="1.0" ry="0.9" fill="#7e8084" opacity="0.5"/><ellipse cx="75.5" cy="37.3" rx="1.1" ry="0.9" fill="#9c9ea2" opacity="0.5"/><ellipse cx="56.3" cy="31.7" rx="1.1" ry="0.5" fill="#9c9ea2" opacity="0.5"/><ellipse cx="47.6" cy="38.9" rx="1.1" ry="0.8" fill="#a8aaae" opacity="0.5"/><ellipse cx="69.6" cy="70.7" rx="1.5" ry="1.1" fill="#9c9ea2" opacity="0.5"/><ellipse cx="67.0" cy="32.9" rx="1.2" ry="0.9" fill="#9c9ea2" opacity="0.5"/><ellipse cx="49.7" cy="71.9" rx="1.3" ry="1.3" fill="#9c9ea2" opacity="0.5"/><ellipse cx="68.1" cy="54.6" rx="1.4" ry="1.0" fill="#a8aaae" opacity="0.5"/><ellipse cx="21.7" cy="43.1" rx="0.8" ry="0.8" fill="#9c9ea2" opacity="0.5"/><ellipse cx="22.6" cy="52.5" rx="0.7" ry="0.4" fill="#7e8084" opacity="0.5"/><ellipse cx="22.5" cy="40.3" rx="0.6" ry="0.5" fill="#a8aaae" opacity="0.5"/><ellipse cx="68.8" cy="31.5" rx="0.9" ry="0.5" fill="#7e8084" opacity="0.5"/><ellipse cx="85.9" cy="40.1" rx="1.4" ry="1.3" fill="#9c9ea2" opacity="0.5"/><ellipse cx="48.9" cy="66.0" rx="1.2" ry="0.8" fill="#7e8084" opacity="0.5"/><ellipse cx="40.2" cy="40.6" rx="0.6" ry="0.6" fill="#7e8084" opacity="0.5"/><ellipse cx="18.7" cy="62.1" rx="0.9" ry="0.8" fill="#9c9ea2" opacity="0.5"/><ellipse cx="44.9" cy="70.1" rx="0.9" ry="0.5" fill="#a8aaae" opacity="0.5"/><ellipse cx="36.1" cy="51.0" rx="1.1" ry="1.1" fill="#7e8084" opacity="0.5"/><ellipse cx="25.9" cy="44.2" rx="1.1" ry="1.0" fill="#9c9ea2" opacity="0.5"/><ellipse cx="87.8" cy="32.8" rx="0.8" ry="0.5" fill="#7e8084" opacity="0.5"/><ellipse cx="39.5" cy="71.2" rx="1.0" ry="0.7" fill="#7e8084" opacity="0.5"/><ellipse cx="50.8" cy="67.5" rx="0.7" ry="0.4" fill="#a8aaae" opacity="0.5"/><ellipse cx="50.9" cy="63.7" rx="1.3" ry="1.0" fill="#7e8084" opacity="0.5"/><ellipse cx="63.6" cy="50.0" rx="1.0" ry="0.9" fill="#7e8084" opacity="0.5"/><ellipse cx="62.8" cy="41.7" rx="0.9" ry="0.5" fill="#9c9ea2" opacity="0.5"/><ellipse cx="65.0" cy="42.8" rx="1.1" ry="0.9" fill="#a8aaae" opacity="0.5"/><ellipse cx="84.1" cy="59.2" rx="0.8" ry="0.8" fill="#9c9ea2" opacity="0.5"/><ellipse cx="12.3" cy="58.2" rx="1.4" ry="0.8" fill="#9c9ea2" opacity="0.5"/><ellipse cx="77.3" cy="37.8" rx="0.6" ry="0.4" fill="#9c9ea2" opacity="0.5"/><ellipse cx="29.2" cy="32.8" rx="1.6" ry="1.5" fill="#9c9ea2" opacity="0.5"/><ellipse cx="9.5" cy="33.8" rx="1.6" ry="0.8" fill="#9c9ea2" opacity="0.5"/><ellipse cx="49.9" cy="36.5" rx="0.7" ry="0.4" fill="#a8aaae" opacity="0.5"/><ellipse cx="71.6" cy="57.2" rx="1.4" ry="0.7" fill="#a8aaae" opacity="0.5"/><ellipse cx="42.7" cy="69.7" rx="0.7" ry="0.6" fill="#a8aaae" opacity="0.5"/><ellipse cx="38.2" cy="57.3" rx="0.6" ry="0.5" fill="#9c9ea2" opacity="0.5"/><ellipse cx="26.8" cy="30.9" rx="1.1" ry="0.7" fill="#7e8084" opacity="0.5"/><ellipse cx="68.5" cy="44.2" rx="0.8" ry="0.8" fill="#7e8084" opacity="0.5"/><ellipse cx="36.9" cy="68.7" rx="1.3" ry="1.1" fill="#a8aaae" opacity="0.5"/><ellipse cx="16.5" cy="57.3" rx="0.8" ry="0.8" fill="#9c9ea2" opacity="0.5"/><ellipse cx="3.7" cy="59.6" rx="0.9" ry="0.6" fill="#a8aaae" opacity="0.5"/><ellipse cx="46.8" cy="43.9" rx="1.5" ry="1.5" fill="#7e8084" opacity="0.5"/><ellipse cx="69.1" cy="45.1" rx="0.7" ry="0.3" fill="#a8aaae" opacity="0.5"/><ellipse cx="45.4" cy="73.7" rx="0.6" ry="0.3" fill="#9c9ea2" opacity="0.5"/><ellipse cx="29.3" cy="53.3" rx="1.4" ry="0.8" fill="#7e8084" opacity="0.5"/><ellipse cx="53.8" cy="46.8" rx="1.0" ry="0.6" fill="#7e8084" opacity="0.5"/><ellipse cx="17.0" cy="35.8" rx="1.6" ry="1.5" fill="#7e8084" opacity="0.5"/><ellipse cx="75.8" cy="43.2" rx="1.5" ry="1.3" fill="#a8aaae" opacity="0.5"/><ellipse cx="5.9" cy="43.6" rx="1.1" ry="0.7" fill="#a8aaae" opacity="0.5"/><ellipse cx="49.7" cy="72.3" rx="0.8" ry="0.8" fill="#a8aaae" opacity="0.5"/><ellipse cx="56.7" cy="34.8" rx="1.5" ry="1.0" fill="#7e8084" opacity="0.5"/>
<clipPath id="strip3"><path d="M50,29 L64,31 Q56,42 52,56 Q48,66 46,74 L14,74 Q26,60 38,52 Q46,42 50,29z"/></clipPath>
<path d="M50,29 L64,31 Q56,42 52,56 Q48,66 46,74 L14,74 Q26,60 38,52 Q46,42 50,29z" fill="#937e6c" opacity="0.85"/>
<g clip-path="url(#strip3)"><ellipse cx="62.3" cy="29.5" rx="1.3" ry="0.8" fill="#7a6454" opacity="0.7"/><ellipse cx="14.8" cy="68.6" rx="1.3" ry="1.2" fill="#c0a890" opacity="0.7"/><ellipse cx="26.0" cy="44.2" rx="1.3" ry="0.8" fill="#c0a890" opacity="0.7"/><ellipse cx="31.2" cy="71.1" rx="0.8" ry="0.5" fill="#c0a890" opacity="0.7"/><ellipse cx="25.2" cy="70.6" rx="1.1" ry="0.7" fill="#6e8a5a" opacity="0.7"/><ellipse cx="56.0" cy="51.0" rx="1.1" ry="1.0" fill="#6e8a5a" opacity="0.7"/><ellipse cx="42.5" cy="70.9" rx="1.2" ry="0.9" fill="#a88a70" opacity="0.7"/><ellipse cx="38.5" cy="71.5" rx="0.6" ry="0.4" fill="#7a6454" opacity="0.7"/><ellipse cx="44.7" cy="64.3" rx="1.4" ry="0.7" fill="#6e8a5a" opacity="0.7"/><ellipse cx="21.6" cy="67.5" rx="1.5" ry="1.0" fill="#a88a70" opacity="0.7"/><ellipse cx="37.4" cy="66.8" rx="1.2" ry="0.8" fill="#7a6454" opacity="0.7"/><ellipse cx="23.0" cy="71.7" rx="1.0" ry="0.6" fill="#c0a890" opacity="0.7"/><ellipse cx="22.2" cy="57.2" rx="1.0" ry="0.7" fill="#6e8a5a" opacity="0.7"/><ellipse cx="53.1" cy="63.1" rx="1.4" ry="0.9" fill="#7a6454" opacity="0.7"/><ellipse cx="19.8" cy="51.2" rx="1.0" ry="0.9" fill="#a88a70" opacity="0.7"/><ellipse cx="28.4" cy="30.9" rx="1.5" ry="1.5" fill="#7a6454" opacity="0.7"/><ellipse cx="55.1" cy="54.4" rx="1.5" ry="1.1" fill="#a88a70" opacity="0.7"/><ellipse cx="37.7" cy="32.7" rx="1.6" ry="1.0" fill="#6e8a5a" opacity="0.7"/><ellipse cx="48.6" cy="40.5" rx="0.7" ry="0.3" fill="#c0a890" opacity="0.7"/><ellipse cx="51.7" cy="66.6" rx="1.0" ry="0.5" fill="#c0a890" opacity="0.7"/><ellipse cx="43.8" cy="43.0" rx="1.4" ry="1.3" fill="#6e8a5a" opacity="0.7"/><ellipse cx="14.8" cy="59.1" rx="0.9" ry="0.7" fill="#a88a70" opacity="0.7"/><ellipse cx="21.2" cy="40.2" rx="1.6" ry="1.1" fill="#7a6454" opacity="0.7"/><ellipse cx="48.2" cy="43.2" rx="0.9" ry="0.7" fill="#7a6454" opacity="0.7"/><ellipse cx="31.0" cy="31.7" rx="0.8" ry="0.7" fill="#a88a70" opacity="0.7"/><ellipse cx="63.4" cy="61.6" rx="1.0" ry="0.9" fill="#7a6454" opacity="0.7"/><ellipse cx="30.8" cy="43.2" rx="1.1" ry="0.9" fill="#6e8a5a" opacity="0.7"/><ellipse cx="42.6" cy="34.5" rx="1.5" ry="1.2" fill="#a88a70" opacity="0.7"/><ellipse cx="53.1" cy="36.0" rx="1.3" ry="1.2" fill="#7a6454" opacity="0.7"/><ellipse cx="42.9" cy="53.8" rx="1.4" ry="0.9" fill="#7a6454" opacity="0.7"/><ellipse cx="63.0" cy="58.1" rx="1.2" ry="1.2" fill="#6e8a5a" opacity="0.7"/><ellipse cx="43.4" cy="66.4" rx="1.3" ry="1.2" fill="#6e8a5a" opacity="0.7"/><ellipse cx="57.3" cy="73.4" rx="1.3" ry="0.9" fill="#c0a890" opacity="0.7"/><ellipse cx="30.9" cy="63.2" rx="1.0" ry="0.6" fill="#6e8a5a" opacity="0.7"/><ellipse cx="59.8" cy="60.4" rx="1.4" ry="0.8" fill="#c0a890" opacity="0.7"/><ellipse cx="24.3" cy="59.5" rx="1.4" ry="1.2" fill="#7a6454" opacity="0.7"/><ellipse cx="58.2" cy="39.3" rx="0.8" ry="0.7" fill="#a88a70" opacity="0.7"/><ellipse cx="32.4" cy="39.2" rx="1.3" ry="0.8" fill="#7a6454" opacity="0.7"/><ellipse cx="39.1" cy="50.5" rx="1.1" ry="0.8" fill="#7a6454" opacity="0.7"/><ellipse cx="35.6" cy="48.0" rx="1.5" ry="1.5" fill="#7a6454" opacity="0.7"/><ellipse cx="47.3" cy="73.0" rx="1.1" ry="0.7" fill="#7a6454" opacity="0.7"/><ellipse cx="15.7" cy="55.3" rx="0.6" ry="0.5" fill="#6e8a5a" opacity="0.7"/><ellipse cx="15.5" cy="49.3" rx="1.1" ry="1.0" fill="#6e8a5a" opacity="0.7"/><ellipse cx="36.7" cy="48.9" rx="1.3" ry="1.0" fill="#a88a70" opacity="0.7"/><ellipse cx="22.3" cy="71.9" rx="1.1" ry="0.8" fill="#6e8a5a" opacity="0.7"/><ellipse cx="40.0" cy="38.6" rx="0.8" ry="0.7" fill="#6e8a5a" opacity="0.7"/><ellipse cx="46.9" cy="60.3" rx="1.3" ry="0.8" fill="#6e8a5a" opacity="0.7"/><ellipse cx="26.7" cy="71.0" rx="0.9" ry="0.6" fill="#c0a890" opacity="0.7"/><ellipse cx="58.3" cy="60.0" rx="0.9" ry="0.7" fill="#c0a890" opacity="0.7"/><ellipse cx="21.6" cy="58.7" rx="0.8" ry="0.5" fill="#a88a70" opacity="0.7"/><ellipse cx="46.8" cy="64.7" rx="1.0" ry="0.7" fill="#c0a890" opacity="0.7"/><ellipse cx="54.7" cy="60.5" rx="1.1" ry="0.9" fill="#6e8a5a" opacity="0.7"/><ellipse cx="51.1" cy="71.8" rx="1.1" ry="0.7" fill="#6e8a5a" opacity="0.7"/><ellipse cx="31.6" cy="44.4" rx="0.9" ry="0.6" fill="#7a6454" opacity="0.7"/><ellipse cx="38.8" cy="72.2" rx="1.3" ry="1.0" fill="#a88a70" opacity="0.7"/><ellipse cx="22.9" cy="52.8" rx="0.9" ry="0.6" fill="#6e8a5a" opacity="0.7"/><ellipse cx="26.5" cy="51.2" rx="0.8" ry="0.5" fill="#6e8a5a" opacity="0.7"/><ellipse cx="60.8" cy="36.2" rx="1.1" ry="0.9" fill="#c0a890" opacity="0.7"/><ellipse cx="45.1" cy="65.5" rx="0.6" ry="0.6" fill="#7a6454" opacity="0.7"/><ellipse cx="15.9" cy="67.1" rx="0.9" ry="0.6" fill="#c0a890" opacity="0.7"/><ellipse cx="30.1" cy="48.0" rx="1.2" ry="0.9" fill="#a88a70" opacity="0.7"/><ellipse cx="60.0" cy="50.4" rx="1.3" ry="1.1" fill="#7a6454" opacity="0.7"/><ellipse cx="34.9" cy="31.9" rx="1.5" ry="1.1" fill="#a88a70" opacity="0.7"/><ellipse cx="17.1" cy="33.0" rx="1.2" ry="1.1" fill="#6e8a5a" opacity="0.7"/><ellipse cx="32.0" cy="37.8" rx="0.9" ry="0.9" fill="#a88a70" opacity="0.7"/><ellipse cx="61.0" cy="31.4" rx="1.1" ry="0.7" fill="#a88a70" opacity="0.7"/><ellipse cx="36.0" cy="30.3" rx="0.6" ry="0.4" fill="#6e8a5a" opacity="0.7"/><ellipse cx="25.1" cy="35.5" rx="0.8" ry="0.6" fill="#7a6454" opacity="0.7"/><ellipse cx="53.7" cy="38.9" rx="1.3" ry="1.3" fill="#6e8a5a" opacity="0.7"/><ellipse cx="56.4" cy="58.5" rx="1.1" ry="0.6" fill="#7a6454" opacity="0.7"/><ellipse cx="33.9" cy="71.1" rx="1.2" ry="1.1" fill="#c0a890" opacity="0.7"/><ellipse cx="51.8" cy="65.5" rx="0.7" ry="0.5" fill="#7a6454" opacity="0.7"/><ellipse cx="39.9" cy="29.5" rx="0.9" ry="0.5" fill="#6e8a5a" opacity="0.7"/><ellipse cx="28.1" cy="32.3" rx="1.1" ry="1.1" fill="#7a6454" opacity="0.7"/><ellipse cx="47.4" cy="62.3" rx="1.3" ry="1.1" fill="#7a6454" opacity="0.7"/><ellipse cx="22.9" cy="37.8" rx="0.7" ry="0.5" fill="#7a6454" opacity="0.7"/><ellipse cx="26.0" cy="68.6" rx="0.9" ry="0.9" fill="#6e8a5a" opacity="0.7"/><ellipse cx="26.5" cy="30.0" rx="1.1" ry="1.1" fill="#a88a70" opacity="0.7"/><ellipse cx="63.9" cy="68.6" rx="1.0" ry="0.5" fill="#c0a890" opacity="0.7"/><ellipse cx="44.3" cy="58.1" rx="1.3" ry="1.2" fill="#a88a70" opacity="0.7"/><ellipse cx="50.3" cy="49.7" rx="1.6" ry="1.3" fill="#7a6454" opacity="0.7"/><ellipse cx="52.9" cy="47.3" rx="1.0" ry="0.9" fill="#6e8a5a" opacity="0.7"/><ellipse cx="47.8" cy="66.7" rx="1.0" ry="0.5" fill="#c0a890" opacity="0.7"/><ellipse cx="48.0" cy="57.0" rx="1.2" ry="0.7" fill="#7a6454" opacity="0.7"/><ellipse cx="64.0" cy="38.4" rx="0.7" ry="0.5" fill="#a88a70" opacity="0.7"/><ellipse cx="55.3" cy="46.1" rx="0.8" ry="0.6" fill="#6e8a5a" opacity="0.7"/><ellipse cx="14.9" cy="64.8" rx="1.2" ry="1.1" fill="#7a6454" opacity="0.7"/><ellipse cx="18.3" cy="33.2" rx="1.5" ry="1.5" fill="#7a6454" opacity="0.7"/><ellipse cx="39.8" cy="60.9" rx="1.1" ry="0.8" fill="#a88a70" opacity="0.7"/><ellipse cx="49.4" cy="46.4" rx="1.5" ry="1.3" fill="#a88a70" opacity="0.7"/></g>
<g fill="#6e8a5a"><ellipse cx="46" cy="40" rx="1.8" ry="1.3"/><ellipse cx="43" cy="50" rx="2" ry="1.5"/><ellipse cx="32" cy="65" rx="2.5" ry="1.5"/></g>
<g fill="#c8b8a8"><circle cx="38" cy="58" r="1"/><circle cx="26" cy="68" r="1"/><circle cx="44" cy="62" r="0.8"/></g>
<ellipse cx="62" cy="60" rx="1.5" ry="1" fill="#5a4438"/>
</g><rect width="89" height="74" filter="url(#nz2)" opacity="0.14"/></svg></div><div class="cap" style="top:336px;height:16px"></div><svg class="abs" style="left:23.4px;top:342.6px" width="7.4" height="6.2" viewBox="0 0 14 12"><rect width="14" height="12" rx="1" fill="#fff"/><path d="M2 10L5.5 5.5L8 8L10 6.5L12 10z" fill="#062b45"/><circle cx="10" cy="3.5" r="1.3" fill="#062b45"/></svg><div class="t ct" id="t32" style="left:33.60px;top:342.12px;font-size:8.721px;line-height:8.721px;transform:scaleX(0.8526)">+ 1 Fotka</div><div class="map" style="top:262px"><svg width="91" height="91" viewBox="0 0 91 91"><rect width="91" height="91" fill="#ebe9e5"/>
<polygon points="0,0 9,0 18,60 0,62" fill="#dedbd5" stroke="#d2cfc8" stroke-width="0.5"/>
<polygon points="44,15 54,15 54,24 44,24" fill="#dedbd5" stroke="#d2cfc8" stroke-width="0.5"/>
<polygon points="7,78 26,78 27,91 7,91" fill="#dedbd5" stroke="#d2cfc8" stroke-width="0.5"/>
<path d="M36 0 L42 30" stroke="#fafafa" stroke-width="0.9" stroke-dasharray="1.4 0.9" fill="none"/>
<path d="M74 0 L91 76" stroke="#fafafa" stroke-width="0.9" stroke-dasharray="1.4 0.9" fill="none"/>
<path d="M32 55 L91 39" stroke="#fafafa" stroke-width="0.9" stroke-dasharray="1.4 0.9" fill="none"/>
<path d="M32 55 L0 79" stroke="#fafafa" stroke-width="0.9" stroke-dasharray="1.4 0.9" fill="none"/>
<path d="M16 2 L23 31" stroke="#fff" stroke-width="3" stroke-linecap="round"/>
<path d="M79 0 L91 26" stroke="#fff" stroke-width="4"/>
<path d="M0 74 Q24 66 28 56 Q30 46 16 45" stroke="#fff" stroke-width="3.5" fill="none"/>
<text x="85" y="22" style="font-family:'Liberation Sans';font-size:5px" fill="#555" transform="rotate(78 85 22)">Saratovská</text>
<rect x="90" y="74" width="1" height="5" fill="#2a4aa0"/>
<ellipse cx="45.5" cy="45" rx="3" ry="1" fill="#000" opacity="0.18"/><path d="M45.5 44.5 C43 41 40 38.8 40 35.8 A5.5 5.5 0 0 1 51 35.8 C51 38.8 48 41 45.5 44.5z" fill="#14b6e2"/><circle cx="45.5" cy="35.8" r="1.8" fill="#fff"/><rect x="38" y="85" width="53" height="6" fill="#f0f0ee" opacity="0.75"/><text x="40" y="89.6" style="font-family:'Liberation Sans';font-size:3.4px" fill="#8a8a8a">© Mapbox © OpenStreetMap</text><circle cx="3.5" cy="87.5" r="1.6" fill="none" stroke="#999" stroke-width="0.5"/></svg></div><svg class="abs" style="left:185px;top:264.3px" width="5" height="6" viewBox="0 0 10 12"><path d="M5 0.3C2.4 0.3 0.5 2.2 0.5 4.6c0 3 4.5 7.2 4.5 7.2s4.5-4.2 4.5-7.2C9.5 2.2 7.6 0.3 5 0.3z" fill="#333"/><circle cx="5" cy="4.6" r="1.6" fill="#fff"/></svg><div class="t ln" id="t33" style="left:194.00px;top:266.58px;font-size:5.814px;line-height:5.814px;transform:scaleX(0.9350)"><u>Saratovská 2757, 841 02 Dúbravka, Slovensko</u> (48.188208, 17.035760 | ± 3m)</div><svg class="abs" style="left:185px;top:272.8px" width="6" height="6" viewBox="0 0 12 12"><path d="M0.8 6.8L6.8 0.8H11.2v4.4L5.2 11.2z" fill="#333"/><circle cx="8.6" cy="3.4" r="1.1" fill="#fff"/></svg><div class="t ln" id="t34" style="left:194.00px;top:274.58px;font-size:5.814px;line-height:5.814px;transform:scaleX(0.9454)">V2. Demontáž ohrádky</div><svg class="abs" style="left:185px;top:284.3px" width="6" height="6" viewBox="0 0 12 12"><circle cx="6" cy="6" r="5" fill="none" stroke="#505050" stroke-width="1.1"/><path d="M6 3v3.6M6 7.9v1.1" stroke="#505050" stroke-width="1.1"/></svg><div class="t ln" id="t35" style="left:194.00px;top:284.58px;font-size:5.814px;line-height:5.814px;transform:scaleX(0.9309)">Nevyriešené (19. úno 2022 12:56)</div><svg class="abs" style="left:185px;top:294.3px" width="6" height="6" viewBox="0 0 12 12"><circle cx="6" cy="6" r="5" fill="none" stroke="#505050" stroke-width="1.1"/><path d="M6 3v3.2l2.4 1.8" fill="none" stroke="#505050" stroke-width="1.1"/></svg><div class="t ln" id="t36" style="left:194.00px;top:294.58px;font-size:5.814px;line-height:5.814px;transform:scaleX(0.9586)">19. úno 2022 12:56 (před 6 hodinami)</div><svg class="abs" style="left:185px;top:303.9px" width="6" height="6" viewBox="0 0 12 12"><rect x="3.2" y="0.6" width="5.6" height="10.8" rx="1" fill="none" stroke="#505050" stroke-width="1.1"/></svg><div class="t ln" id="t37" style="left:194.00px;top:304.58px;font-size:5.814px;line-height:5.814px;transform:scaleX(0.8977)">BA KP 2</div><svg class="abs" style="left:185px;top:314.1px" width="6" height="6" viewBox="0 0 12 12"><path d="M2.4 0.6h5l2.6 2.6v8.2H2.4z" fill="none" stroke="#505050" stroke-width="1.1"/><path d="M4 6.2h4M4 8.4h4" stroke="#505050" stroke-width="0.9"/></svg><div class="t ln" id="t38" style="left:194.00px;top:314.58px;font-size:5.814px;line-height:5.814px;transform:scaleX(0.9309)">Saratovská 1 odstranena</div><svg class="abs" style="left:185px;top:324.0px" width="6" height="6" viewBox="0 0 12 12"><circle cx="6" cy="3.6" r="2.6" fill="none" stroke="#505050" stroke-width="1.1"/><path d="M1.2 11.6c0-3 2.2-4.6 4.8-4.6s4.8 1.6 4.8 4.6" fill="none" stroke="#505050" stroke-width="1.1"/></svg><div class="t ln" id="t39" style="left:194.00px;top:324.58px;font-size:5.814px;line-height:5.814px;transform:scaleX(0.8986)">Emil NESPEŠNÝ, +421 904 917 505</div><div class="badge" style="top:265.8px"></div><div class="t bt" id="t40" style="left:606.80px;top:268.19px;font-size:5.087px;line-height:5.087px;transform:scaleX(1.0873)">9321192</div><div class="btn" style="left:185px;top:338.40px;width:56px"></div><svg class="abs" style="left:191.20000000000002px;top:342.40000000000003px" width="5.4" height="4.6" viewBox="0 0 9 7.6"><path d="M0 3.8C1.6 0 7.4 0 9 3.8C7.4 7.6 1.6 7.6 0 3.8z" fill="#222"/><circle cx="4.5" cy="3.8" r="1.3" fill="#999"/></svg><div class="t bx" id="t41" style="left:198.80px;top:342.21px;font-size:6.250px;line-height:6.250px;transform:scaleX(0.8914)">Zobrazit detail</div><div class="btn" style="left:242.5px;top:338.40px;width:63.5px"></div><svg class="abs" style="left:248.8px;top:342.2px" width="4" height="5" viewBox="0 0 8 10"><path d="M4 0C1.8 0 0 1.8 0 4c0 3 4 6 4 6s4-3 4-6C8 1.8 6.2 0 4 0z" fill="#222"/><circle cx="4" cy="4" r="1.4" fill="#fff"/></svg><div class="t bx" id="t42" style="left:255.00px;top:342.21px;font-size:6.250px;line-height:6.250px;transform:scaleX(0.9252)">Zobrazit na mapě</div><div class="btn" style="left:308.5px;top:338.40px;width:46.0px"></div><div class="t bx" id="t43" style="left:313.50px;top:342.21px;font-size:6.250px;line-height:6.250px;transform:scaleX(0.8908)">Změň stav</div><svg class="abs" style="left:342.1px;top:342.40000000000003px" width="6.4" height="4.4" viewBox="0 0 6.4 4.4"><path d="M0.8 3.7L3.2 1.2L5.6 3.7" fill="none" stroke="#222" stroke-width="0.85"/></svg><div class="btn" style="left:357px;top:338.40px;width:60.5px"></div><svg class="abs" style="left:363.5px;top:342.8px" width="5" height="4" viewBox="0 0 10 8"><rect width="10" height="8" fill="#222"/><path d="M0.5 0.8L5 4.2L9.5 0.8" fill="none" stroke="#fff" stroke-width="0.9"/></svg><div class="t bx" id="t44" style="left:372.00px;top:342.21px;font-size:6.250px;line-height:6.250px;transform:scaleX(0.8926)">Poslat e-mailem</div><div class="btn" style="left:420.5px;top:338.40px;width:56.0px"></div><svg class="abs" style="left:427.5px;top:342.3px" width="5" height="5" viewBox="0 0 10 10"><ellipse cx="5" cy="4.6" rx="4.8" ry="4.2" fill="#222"/><path d="M1.2 7.6L0.2 9.8L3.6 8.6z" fill="#222"/></svg><div class="t bx" id="t45" style="left:435.00px;top:342.21px;font-size:6.250px;line-height:6.250px;transform:scaleX(0.8760)">Komentáře (0)</div><div class="btn" style="left:479px;top:338.40px;width:56px"></div><svg class="abs" style="left:486.5px;top:341.8px" width="3" height="6" viewBox="0 0 6 12"><circle cx="3" cy="1.5" r="1.5" fill="#222"/><path d="M1 3.5h4v4.5h-1v4h-2v-4h-1z" fill="#222"/></svg><div class="t bx" id="t46" style="left:492.00px;top:342.21px;font-size:6.250px;line-height:6.250px;transform:scaleX(0.8963)">Náhled na ulici</div><div class="btn" style="left:537.5px;top:338.40px;width:33.0px"></div><div class="t bx" id="t47" style="left:544.20px;top:342.21px;font-size:6.250px;line-height:6.250px;transform:scaleX(0.8198)">Akce</div><svg class="abs" style="left:558.2px;top:342.40000000000003px" width="6.4" height="4.4" viewBox="0 0 6.4 4.4"><path d="M0.8 3.7L3.2 1.2L5.6 3.7" fill="none" stroke="#222" stroke-width="0.85"/></svg>
 <div id="nav"></div>
 <svg class="abs" style="left:0;top:43px;z-index:4" width="640" height="19" viewBox="0 0 640 19">
 <polygon points="12.4,4.2 18.4,9.9 17,9.9 17,14.8 13.7,14.8 13.7,12 11.2,12 11.2,14.8 7.9,14.8 7.9,9.9 6.5,9.9" fill="#fff"/><polygon points="23.1,6.8 25.4,6.8 27.9,12.3 26.7,14.6" fill="#fff"/><polygon points="29.3,3.8 32,3.8 28.3,14.6 25.9,14.6" fill="#fff"/><circle cx="23.5" cy="5" r="0.9" fill="#1aa8e8"/>
 <path d="M94 6.9h1M94 9.4h1M94 11.9h1M96.5 6.9h5M96.5 9.4h5M96.5 11.9h5" stroke="#fff" stroke-width="0.8"/>
 <rect x="88.3" y="17.6" width="64.2" height="1.5" fill="#fff"/>
 <g transform="translate(156.8 5.8) scale(0.48)"><path d="M9 1.2a3.6 3.6 0 0 0-3.6 3.6c0 2.4 3.6 5.8 3.6 5.8s3.6-3.4 3.6-5.8A3.6 3.6 0 0 0 9 1.2z" fill="#fff"/><circle cx="9" cy="4.8" r="1.3" fill="#062b45"/><path d="M3.5 8.5h2.5l3 3l3-3h2.5l3 8h-17z" fill="#fff"/><circle cx="5" cy="13.5" r="0.9" fill="#062b45"/><circle cx="12.5" cy="13.5" r="0.9" fill="#062b45"/></g>
 <g transform="translate(193.8 5.8) scale(0.5)"><rect x="0.5" y="0.5" width="10" height="8.5" fill="#fff"/><rect x="6.5" y="3" width="2.2" height="4.5" fill="#062b45"/><rect x="2" y="6" width="14" height="9.5" fill="#fff"/><rect x="4" y="9.5" width="7" height="1.6" fill="#062b45"/><circle cx="12.5" cy="8" r="1" fill="#062b45"/></g>
 <g transform="translate(234.8 6.6) scale(0.5)"><path d="M0 0h2v11h12.8v2H0z" fill="#fff"/><path d="M3 11V5l3 3l3-4l3 2.5V1.5l1.8 0V11z" fill="#fff"/></g>
 <rect x="550" y="3.5" width="44.5" height="12" rx="1.5" fill="#12364f" stroke="#8799a8" stroke-width="0.8"/>
 <path d="M585.4 8.3l2.1 2.1l2.1-2.1" fill="none" stroke="#fff" stroke-width="0.8"/>
 <path d="M628.2 9.2l1.4 1.3l1.4-1.3" fill="none" stroke="#fff" stroke-width="0.7"/>
 </svg>
 <div id="bar"></div>
 <svg class="abs" style="left:0;top:62px;z-index:4" width="640" height="19" viewBox="0 0 640 19">
 <rect x="4.5" y="3.5" width="51.3" height="13" rx="1.5" fill="none" stroke="rgba(255,255,255,0.45)" stroke-width="0.9"/>
 <path d="M11 9.3h4.6M13.4 7.1l2.2 2.2l-2.2 2.2" fill="none" stroke="#fff" stroke-width="0.8"/>
 <circle cx="63.8" cy="10.1" r="2.5" fill="none" stroke="#fff" stroke-width="0.7"/><path d="M63.8 8.6v1.8M63.8 11v0.7" stroke="#fff" stroke-width="0.7"/>
 <rect x="485.5" y="3.3" width="31" height="13" rx="1.5" fill="none" stroke="rgba(255,255,255,0.45)" stroke-width="0.9"/>
 <g fill="none" stroke="#fff" stroke-width="0.8"><rect x="492" y="8.6" width="5.4" height="2.6"/><rect x="493.1" y="7.2" width="3.2" height="1.4"/><rect x="493.1" y="10.8" width="3.2" height="1.8"/></g>
 <rect x="520.3" y="3.3" width="103.5" height="13" rx="1.5" fill="none" stroke="rgba(255,255,255,0.45)" stroke-width="0.9"/>
 <path d="M614 9.1l1.4 1.3l1.4-1.3" fill="none" stroke="#fff" stroke-width="0.7"/>
 <circle cx="632.4" cy="9.6" r="2.8" fill="none" stroke="#fff" stroke-width="0.7"/><path d="M631.6 8.8a0.85 0.85 0 1 1 1.1 0.85v0.6" fill="none" stroke="#fff" stroke-width="0.55"/><circle cx="632.7" cy="11.2" r="0.3" fill="#fff"/>
 </svg>

<div class="t wt" id="t48" style="left:35.70px;top:49.24px;font-size:8.576px;line-height:8.576px;transform:scaleX(0.8781)">OLO Evidence</div><div class="t wt" id="t49" style="left:105.80px;top:49.59px;font-size:6.977px;line-height:6.977px;transform:scaleX(0.8283)">Seznam hlášení</div><div class="t wt" id="t50" style="left:168.80px;top:49.59px;font-size:6.977px;line-height:6.977px;transform:scaleX(0.8602)">Mapa</div><div class="t wt" id="t51" style="left:205.80px;top:49.59px;font-size:6.977px;line-height:6.977px;transform:scaleX(0.7922)">Galerie</div><div class="t wt" id="t52" style="left:246.80px;top:49.59px;font-size:6.977px;line-height:6.977px;transform:scaleX(0.8318)">Statistiky</div><div class="t wt" id="t53" style="left:554.80px;top:49.84px;font-size:6.686px;line-height:6.686px;-webkit-text-stroke:0.15px #fff;transform:scaleX(0.7602)">Česky</div><div class="t wt" id="t54" style="left:610.90px;top:50.33px;font-size:6.105px;line-height:6.105px;font-weight:bold;transform:scaleX(0.9170)">Menu</div><div class="t wt" id="t55" style="left:19.00px;top:69.21px;font-size:6.250px;line-height:6.250px;-webkit-text-stroke:0.18px #fff;transform:scaleX(0.9340)">Zobrazit filtr</div><div class="t wt" id="t56" style="left:68.90px;top:68.84px;font-size:6.686px;line-height:6.686px;transform:scaleX(0.8459)">Nalezeno 177 položek: <b style="-webkit-text-stroke:0.2px #fff">Od Začátku do 19. úno 2022 <u>(19:17)</u>:</b></div><div class="t wt" id="t57" style="left:228.90px;top:69.95px;font-size:5.378px;line-height:5.378px;transform:scaleX(0.8344)">Filtrovat podle <b>Příčiny</b>:</div><div class="t wt" id="t58" style="left:500.90px;top:69.21px;font-size:6.250px;line-height:6.250px;-webkit-text-stroke:0.2px #fff;transform:scaleX(0.8011)">Tisk</div><div class="t wt" id="t59" style="left:526.60px;top:69.21px;font-size:6.250px;line-height:6.250px;-webkit-text-stroke:0.2px #fff;transform:scaleX(0.8826)">Exportovat a sdílet 177 záznamov</div>
<div id="help"></div><svg class="abs" style="left:608px;top:320.5px;z-index:6" width="24" height="24" viewBox="0 0 24 24"><path d="M9.4 9.6a2.7 2.7 0 1 1 3.9 2.4c-0.9 0.5-1.3 1-1.3 2v0.9" fill="none" stroke="#fff" stroke-width="2" stroke-linecap="round"/><circle cx="12" cy="16.9" r="1.05" fill="#fff"/></svg>
</body></html>
